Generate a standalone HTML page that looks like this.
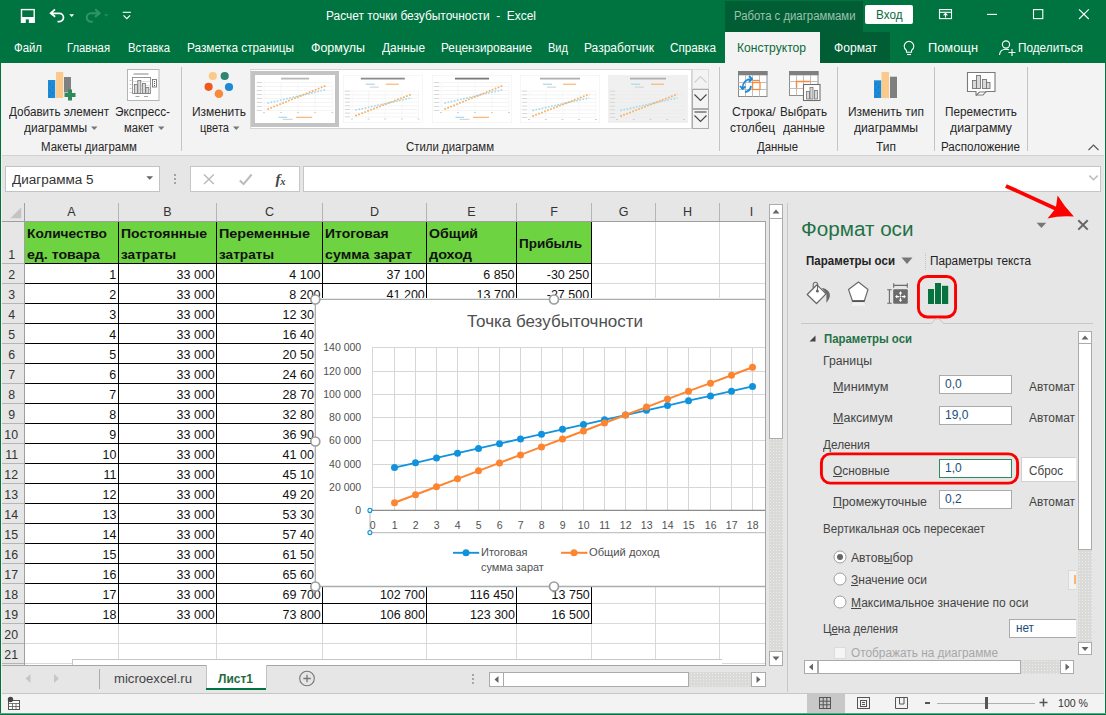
<!DOCTYPE html>
<html lang="ru"><head><meta charset="utf-8"><title>Excel</title><style>html,body{margin:0;padding:0;}body{width:1106px;height:715px;position:relative;overflow:hidden;background:#e6e6e6;font-family:"Liberation Sans",sans-serif;}.b{position:absolute;display:block;}.t{position:absolute;white-space:pre;display:block;}</style></head><body>
<div class="b" style="left:0px;top:0px;width:1106px;height:63px;background:#007440;"></div>
<div class="b" style="left:725px;top:1px;width:138px;height:31px;background:#005d34;"></div>
<span class="t" style="left:734.30px;top:8px;font-size:12px;line-height:16px;color:#9cc3af;transform:scaleX(0.9454);transform-origin:0 50%;">Работа с диаграммами</span>
<span class="t" style="left:326.00px;top:8px;font-size:12.5px;line-height:17px;color:#ffffff;transform:scaleX(0.9546);transform-origin:0 50%;">Расчет точки безубыточности  -  Excel</span>
<div class="b" style="left:865px;top:5px;width:48px;height:19px;background:#ffffff;border-radius:2px;"></div>
<span class="t" style="left:876.00px;top:7px;font-size:12.5px;line-height:17px;color:#0b6a3c;transform:scaleX(0.9371);transform-origin:0 50%;">Вход</span>
<svg class="b" style="left:18px;top:7px;" width="120" height="18" viewBox="0 0 120 18">
<rect x="3.500" y="2.600" width="12.700" height="12.700" fill="none" stroke="#fff" stroke-width="1.400"/>
<rect x="3.500" y="10" width="12.700" height="5.300" fill="#fff"/>
<rect x="7.800" y="12.400" width="3" height="3.600" fill="#007440"/>
<path d="M37 2.400L32.600 6.300L37.200 9.800M33 6.300H41.300a4.200 4.200 0 0 1 0 8.400h-1.800" fill="none" stroke="#fff" stroke-width="1.700"/>
<path d="M51.200 7.200h5l-2.500 2.800z" fill="#fff"/>
<path d="M77.200 2.400L81.600 6.300L77 9.800M81.200 6.300H73a4.200 4.200 0 0 0 0 8.400h1.800" fill="none" stroke="#2f9468" stroke-width="2.100"/>
<path d="M86 7.200h4.600l-2.300 2.600z" fill="#25895e"/>
<path d="M104.700 5.300h8.200" stroke="#fff" stroke-width="1.100"/><path d="M105.500 8.300l3.300 3.300 3.300-3.300" fill="none" stroke="#fff" stroke-width="1.200"/>
</svg>
<svg class="b" style="left:930px;top:4px;" width="176" height="24" viewBox="0 0 176 24">
<g fill="none" stroke="#fff" stroke-width="1.100">
<rect x="9.500" y="5.600" width="12" height="9"/><path d="M9.500 8.300h12"/><path d="M15.500 13.500v-3.800M13.600 11.300l1.900-1.900 1.900 1.900"/>
<path d="M57 10.400h10"/>
<rect x="103.500" y="5.600" width="9.300" height="9"/>
<path d="M149 5.400l9.800 9.600M158.800 5.400l-9.800 9.600"/>
</g></svg>
<span class="t" style="left:14.00px;top:40px;font-size:12.5px;line-height:17px;color:#ffffff;transform:scaleX(0.9110);transform-origin:0 50%;">Файл</span>
<span class="t" style="left:67.00px;top:40px;font-size:12.5px;line-height:17px;color:#ffffff;transform:scaleX(0.9038);transform-origin:0 50%;">Главная</span>
<span class="t" style="left:128.00px;top:40px;font-size:12.5px;line-height:17px;color:#ffffff;transform:scaleX(0.9040);transform-origin:0 50%;">Вставка</span>
<span class="t" style="left:187.00px;top:40px;font-size:12.5px;line-height:17px;color:#ffffff;transform:scaleX(0.9435);transform-origin:0 50%;">Разметка страницы</span>
<span class="t" style="left:311.00px;top:40px;font-size:12.5px;line-height:17px;color:#ffffff;transform:scaleX(0.9927);transform-origin:0 50%;">Формулы</span>
<span class="t" style="left:382.00px;top:40px;font-size:12.5px;line-height:17px;color:#ffffff;transform:scaleX(0.9522);transform-origin:0 50%;">Данные</span>
<span class="t" style="left:441.00px;top:40px;font-size:12.5px;line-height:17px;color:#ffffff;transform:scaleX(0.9427);transform-origin:0 50%;">Рецензирование</span>
<span class="t" style="left:548.00px;top:40px;font-size:12.5px;line-height:17px;color:#ffffff;transform:scaleX(0.8844);transform-origin:0 50%;">Вид</span>
<span class="t" style="left:584.00px;top:40px;font-size:12.5px;line-height:17px;color:#ffffff;transform:scaleX(0.9602);transform-origin:0 50%;">Разработчик</span>
<span class="t" style="left:670.00px;top:40px;font-size:12.5px;line-height:17px;color:#ffffff;transform:scaleX(0.9380);transform-origin:0 50%;">Справка</span>
<div class="b" style="left:725px;top:32px;width:95px;height:31px;background:#f3f3f3;"></div>
<span class="t" style="left:737.00px;top:40px;font-size:12.5px;line-height:17px;color:#0b6a3c;transform:scaleX(0.9680);transform-origin:0 50%;">Конструктор</span>
<div class="b" style="left:820px;top:32px;width:70px;height:31px;background:#005d34;"></div>
<span class="t" style="left:834.00px;top:40px;font-size:12.5px;line-height:17px;color:#ffffff;transform:scaleX(0.9682);transform-origin:0 50%;">Формат</span>
<span class="t" style="left:928.00px;top:40px;font-size:12.5px;line-height:17px;color:#ffffff;transform:scaleX(1.0273);transform-origin:0 50%;">Помощн</span>
<span class="t" style="left:1018.00px;top:40px;font-size:12.5px;line-height:17px;color:#ffffff;transform:scaleX(0.9416);transform-origin:0 50%;">Поделиться</span>
<svg class="b" style="left:900px;top:38px;" width="20" height="20" viewBox="0 0 20 20"><g fill="none" stroke="#fff" stroke-width="1.1"><path d="M6.5 12.5c-1.6-1.2-2.3-2.6-2.3-4.3a4.8 4.8 0 0 1 9.6 0c0 1.700-.7 3.100-2.300 4.300v1.800h-5z"/><path d="M7 16.500h4"/></g></svg>
<svg class="b" style="left:997px;top:38px;" width="20" height="20" viewBox="0 0 20 20"><g fill="none" stroke="#fff" stroke-width="1.1"><circle cx="9" cy="6.5" r="3.6"/><path d="M2.500 17c.3-3.600 2.800-5.800 6.500-5.800 1.200 0 2.200.2 3 .6"/><path d="M15 11v7M11.500 14.500h7"/></g></svg>
<div class="b" style="left:0px;top:63px;width:1106px;height:92px;background:#f3f3f3;"></div>
<div class="b" style="left:0px;top:155px;width:1106px;height:1px;background:#d2d2d2;"></div>
<span class="t" style="left:9.00px;top:104px;font-size:12.5px;line-height:17px;color:#262626;transform:scaleX(0.9324);transform-origin:0 50%;">Добавить элемент</span>
<span class="t" style="left:24.00px;top:120px;font-size:12.5px;line-height:17px;color:#262626;transform:scaleX(0.9565);transform-origin:0 50%;">диаграммы</span>
<span class="t" style="left:115.00px;top:104px;font-size:12.5px;line-height:17px;color:#262626;transform:scaleX(0.9453);transform-origin:0 50%;">Экспресс-</span>
<span class="t" style="left:124.00px;top:120px;font-size:12.5px;line-height:17px;color:#262626;transform:scaleX(0.8976);transform-origin:0 50%;">макет</span>
<span class="t" style="left:192.00px;top:104px;font-size:12.5px;line-height:17px;color:#262626;transform:scaleX(0.9577);transform-origin:0 50%;">Изменить</span>
<span class="t" style="left:200.00px;top:120px;font-size:12.5px;line-height:17px;color:#262626;transform:scaleX(0.8858);transform-origin:0 50%;">цвета</span>
<span class="t" style="left:41.00px;top:139px;font-size:12.5px;line-height:17px;color:#262626;transform:scaleX(0.9167);transform-origin:0 50%;">Макеты диаграмм</span>
<span class="t" style="left:406.00px;top:139px;font-size:12.5px;line-height:17px;color:#262626;transform:scaleX(0.9131);transform-origin:0 50%;">Стили диаграмм</span>
<span class="t" style="left:731.50px;top:104px;font-size:12.5px;line-height:17px;color:#262626;transform:scaleX(0.9704);transform-origin:0 50%;">Строка/</span>
<span class="t" style="left:730.00px;top:120px;font-size:12.5px;line-height:17px;color:#262626;transform:scaleX(0.9586);transform-origin:0 50%;">столбец</span>
<span class="t" style="left:780.00px;top:104px;font-size:12.5px;line-height:17px;color:#262626;transform:scaleX(0.9334);transform-origin:0 50%;">Выбрать</span>
<span class="t" style="left:783.00px;top:120px;font-size:12.5px;line-height:17px;color:#262626;transform:scaleX(0.9548);transform-origin:0 50%;">данные</span>
<span class="t" style="left:757.00px;top:139px;font-size:12.5px;line-height:17px;color:#262626;transform:scaleX(0.9079);transform-origin:0 50%;">Данные</span>
<span class="t" style="left:848.00px;top:104px;font-size:12.5px;line-height:17px;color:#262626;transform:scaleX(0.9579);transform-origin:0 50%;">Изменить тип</span>
<span class="t" style="left:854.00px;top:120px;font-size:12.5px;line-height:17px;color:#262626;transform:scaleX(0.9717);transform-origin:0 50%;">диаграммы</span>
<span class="t" style="left:876.00px;top:139px;font-size:12.5px;line-height:17px;color:#262626;transform:scaleX(0.9597);transform-origin:0 50%;">Тип</span>
<span class="t" style="left:945.00px;top:104px;font-size:12.5px;line-height:17px;color:#262626;transform:scaleX(0.9401);transform-origin:0 50%;">Переместить</span>
<span class="t" style="left:950.00px;top:120px;font-size:12.5px;line-height:17px;color:#262626;transform:scaleX(0.9799);transform-origin:0 50%;">диаграмму</span>
<span class="t" style="left:941.00px;top:139px;font-size:12.5px;line-height:17px;color:#262626;transform:scaleX(0.9297);transform-origin:0 50%;">Расположение</span>
<svg class="b" style="left:90.5px;top:126px;" width="7" height="5" viewBox="0 0 7 5"><path d="M0 .5h6.500L3.250 4z" fill="#777"/></svg>
<svg class="b" style="left:157.5px;top:126px;" width="7" height="5" viewBox="0 0 7 5"><path d="M0 .5h6.500L3.250 4z" fill="#777"/></svg>
<svg class="b" style="left:232.5px;top:126px;" width="7" height="5" viewBox="0 0 7 5"><path d="M0 .5h6.500L3.250 4z" fill="#777"/></svg>
<div class="b" style="left:181px;top:67px;width:1px;height:84px;background:#c4c4c4;"></div>
<div class="b" style="left:719px;top:67px;width:1px;height:84px;background:#c4c4c4;"></div>
<div class="b" style="left:837px;top:67px;width:1px;height:84px;background:#c4c4c4;"></div>
<div class="b" style="left:934px;top:67px;width:1px;height:84px;background:#c4c4c4;"></div>
<div class="b" style="left:1027px;top:67px;width:1px;height:84px;background:#c4c4c4;"></div>
<svg class="b" style="left:1087px;top:143px;" width="13" height="9" viewBox="0 0 13 9"><path d="M1.500 7l5-5 5 5" fill="none" stroke="#555" stroke-width="1.1"/></svg>
<svg class="b" style="left:46px;top:70px;" width="32" height="32" viewBox="0 0 32 32">
<rect x="2" y="10" width="7.200" height="18" fill="#1e8ad6"/>
<rect x="10" y="2" width="7.200" height="26" fill="#fbc98a"/>
<rect x="18" y="7" width="7" height="15.500" fill="#808080"/>
<path d="M22 19.500h4v3.500h3.500v4H26v3.500h-4V27h-3.500v-4H22z" fill="#2e8b5a"/>
<g fill="#0c5fa8"><circle cx="4" cy="14" r=".5"/><circle cx="6.500" cy="17" r=".5"/><circle cx="4" cy="20" r=".5"/><circle cx="6.500" cy="23" r=".5"/><circle cx="4" cy="26" r=".5"/></g>
</svg>
<svg class="b" style="left:127px;top:69px;" width="33" height="33" viewBox="0 0 33 33">
<rect x=".5" y=".5" width="31.500" height="31" fill="#fff" stroke="#b5b5b5"/>
<path d="M6.500 5h15" stroke="#b5b5b5" stroke-width="1.6"/>
<rect x="5.500" y="8.500" width="18" height="16" fill="#fff" stroke="#8a8a8a" stroke-width=".9"/>
<path d="M5.500 12.500h18M5.500 16.500h18M5.500 20.500h18" stroke="#cfcfcf" stroke-width=".7"/>
<g fill="#d9d9d9" stroke="#767676" stroke-width=".8"><rect x="7.500" y="15.500" width="3" height="9"/><rect x="10.800" y="11.500" width="3" height="13"/><rect x="15.500" y="14.500" width="3" height="10"/><rect x="18.800" y="18.500" width="3" height="6"/></g>
<rect x="25.500" y="10.500" width="4" height="7.500" fill="#fff" stroke="#767676" stroke-width=".9"/>
<g fill="#555"><rect x="27" y="12" width="1" height="1"/><rect x="27" y="14" width="1" height="1"/><rect x="27" y="16" width="1" height="1"/></g>
<path d="M8.500 27.500h4M17 27.500h4" stroke="#9a9a9a" stroke-width=".9"/>
<path d="M2.500 11.500h2M2.500 15.500h2M2.500 19.500h2M2.500 23.500h2" stroke="#b0b0b0" stroke-width=".7"/>
</svg>
<svg class="b" style="left:203px;top:70px;" width="32" height="30" viewBox="0 0 32 30">
<circle cx="9.800" cy="6" r="4.100" fill="#fbc98a"/>
<circle cx="21.700" cy="6" r="4.100" fill="#2f8670"/>
<circle cx="5.600" cy="16.800" r="4.100" fill="#f0581e"/>
<circle cx="26" cy="17" r="4.100" fill="#1e8ad6"/>
<circle cx="15.900" cy="23.800" r="4.300" fill="#f98a3a"/>
</svg>
<svg class="b" style="left:737px;top:70px;" width="32" height="28" viewBox="0 0 32 28">
<rect x="1.500" y="1.500" width="28.500" height="25" fill="#fff" stroke="#8d8d8d"/>
<rect x="1" y="1" width="29.500" height="4.300" fill="#7f7f7f"/>
<path d="M1.500 12.500h28.500M1.500 19.500h28.500M8.500 5v21.500M15.500 5v21.500M22.500 5v21.500" stroke="#b9b9b9" stroke-width=".9"/>
<rect x="15.500" y="12.500" width="7.500" height="7" fill="#fff" stroke="#f58a3c" stroke-width="1.300"/>
<path d="M15.500 10.500h7.500" stroke="#f58a3c" stroke-width="1.300"/>
<path d="M5.500 18.500c0-6 3.500-9.500 9-9.500M12 6l3 3-3 3M3 16l2.500 3 3-2.500" fill="none" stroke="#1e8ad6" stroke-width="1.800"/>
<path d="M8 22c3.500-.5 5.500-2.500 6-6" fill="none" stroke="#1e8ad6" stroke-width="1.800"/>
</svg>
<svg class="b" style="left:788px;top:70px;" width="34" height="32" viewBox="0 0 34 32">
<rect x="1.500" y="1.500" width="28.500" height="24" fill="#fff" stroke="#8d8d8d"/>
<rect x="1" y="1" width="29.500" height="4.300" fill="#7f7f7f"/>
<path d="M1.500 11.500h28.500M1.500 18.500h28.500M8.500 5v20.500M15.500 5v20.500M22.500 5v20.500" stroke="#b9b9b9" stroke-width=".9"/>
<path d="M8.500 18.500v-7h14" fill="none" stroke="#f58a3c" stroke-width="1.400"/>
<rect x="15.500" y="14.500" width="16.500" height="16" fill="#fff" stroke="#6f6f6f" stroke-width="1.100"/>
<g fill="#d9d9d9" stroke="#767676" stroke-width=".8"><rect x="18.500" y="21.500" width="3" height="7.500"/><rect x="22" y="17.500" width="3" height="11.500"/><rect x="26.500" y="20.500" width="3" height="8.500"/></g>
</svg>
<svg class="b" style="left:872px;top:70px;" width="28" height="30" viewBox="0 0 28 30">
<rect x="2" y="10.300" width="7.300" height="17.700" fill="#1e8ad6"/>
<rect x="9.500" y="2" width="7.500" height="26" fill="#fbc98a"/>
<rect x="18" y="6.700" width="7" height="21.300" fill="#7f7f7f"/>
<g fill="#0c5fa8"><circle cx="4" cy="14" r=".5"/><circle cx="6.500" cy="17" r=".5"/><circle cx="4" cy="20" r=".5"/><circle cx="6.500" cy="23" r=".5"/><circle cx="4" cy="26" r=".5"/></g>
</svg>
<svg class="b" style="left:966px;top:71px;" width="31" height="27" viewBox="0 0 31 27">
<path d="M1.500 1.500h27.500v19h-9l-3 3.500h-7v-3.500h-8.500z" fill="#fff" stroke="#7a7a7a" stroke-width="1.100"/>
<path d="M10 24.500l3.500-3.500h7" fill="none" stroke="#7a7a7a" stroke-width="1.100"/>
<g fill="#d9d9d9" stroke="#767676" stroke-width=".9"><rect x="6.500" y="9.500" width="4" height="8"/><rect x="10.500" y="4.500" width="4" height="13"/><rect x="16.500" y="8.500" width="4" height="9"/><rect x="20.500" y="11.500" width="3.500" height="6"/></g>
</svg>
<div class="b" style="left:250px;top:69px;width:442px;height:60px;background:#ffffff;border:1px solid #d4d4d4;box-sizing:border-box;"></div>
<div class="b" style="left:251px;top:71px;width:88px;height:56px;background:#c1c4c2;"></div>
<svg class="b" style="left:255px;top:75px;" width="80.3" height="48" viewBox="0 0 80.3 48"><rect x="0" y="0" width="80.3" height="48" fill="#fff"/><rect x="26.1" y="2.700" width="28" height="1.800" fill="#b9b9b9"/><rect x="23.65" y="41.7" width="8.500" height="1.300" fill="#a9dcf2"/><rect x="41.15" y="41.7" width="16" height="1.300" fill="#f9bb7c"/><rect x="27.65" y="43.8" width="10" height="1.100" fill="#d3d3d3"/><path d="M9 7.5H77.3" stroke="#e9e9e9" stroke-width=".5"/><rect x="1.800" y="7.0" width="5.500" height="1" fill="#d6d6d6"/><path d="M9 11.5H77.3" stroke="#e9e9e9" stroke-width=".5"/><rect x="1.800" y="11.0" width="5.500" height="1" fill="#d6d6d6"/><path d="M9 15.5H77.3" stroke="#e9e9e9" stroke-width=".5"/><rect x="1.800" y="15.0" width="5.500" height="1" fill="#d6d6d6"/><path d="M9 19.5H77.3" stroke="#e9e9e9" stroke-width=".5"/><rect x="1.800" y="19.0" width="5.500" height="1" fill="#d6d6d6"/><path d="M9 23.4H77.3" stroke="#e9e9e9" stroke-width=".5"/><rect x="1.800" y="22.9" width="5.500" height="1" fill="#d6d6d6"/><path d="M9 27.4H77.3" stroke="#e9e9e9" stroke-width=".5"/><rect x="1.800" y="26.9" width="5.500" height="1" fill="#d6d6d6"/><path d="M9 31.4H77.3" stroke="#e9e9e9" stroke-width=".5"/><rect x="1.800" y="30.9" width="5.500" height="1" fill="#d6d6d6"/><path d="M9 35.4H77.3" stroke="#e9e9e9" stroke-width=".5"/><rect x="1.800" y="34.9" width="5.500" height="1" fill="#d6d6d6"/><path d="M9.0 7.5V35.4" stroke="#efefef" stroke-width=".5"/><rect x="8.0" y="37.1" width="2" height="1" fill="#d0d0d0"/><path d="M26.1 7.5V35.4" stroke="#efefef" stroke-width=".5"/><rect x="25.1" y="37.1" width="2" height="1" fill="#d0d0d0"/><path d="M43.1 7.5V35.4" stroke="#efefef" stroke-width=".5"/><rect x="42.1" y="37.1" width="2" height="1" fill="#d0d0d0"/><path d="M60.2 7.5V35.4" stroke="#efefef" stroke-width=".5"/><rect x="59.2" y="37.1" width="2" height="1" fill="#d0d0d0"/><path d="M77.3 7.5V35.4" stroke="#efefef" stroke-width=".5"/><rect x="76.3" y="37.1" width="2" height="1" fill="#d0d0d0"/><path d="M12.4 28.2L70.5 14.8" stroke="#9fdaf2" stroke-width="1.600" stroke-dasharray="1.700 1.500"/><path d="M12.4 34.3L70.5 10.8" stroke="#f9b060" stroke-width="1.800" stroke-dasharray="1.700 1.500"/></svg>
<svg class="b" style="left:343.4px;top:75px;" width="79.5" height="47.5" viewBox="0 0 79.5 47.5"><rect x="0" y="0" width="79.5" height="47.5" fill="#fff"/><rect x=".25" y=".25" width="79.0" height="47.0" fill="none" stroke="#ededed" stroke-width=".5"/><rect x="17.8" y="2.700" width="44" height="1.800" fill="#8c8c8c"/><rect x="22.75" y="8.600" width="9" height="1.300" fill="#a9dcf2"/><rect x="42.75" y="8.600" width="13" height="1.300" fill="#f9bb7c"/><rect x="26.75" y="11.600" width="9" height="1.100" fill="#d3d3d3"/><path d="M9 16.1H75.5" stroke="#e9e9e9" stroke-width=".5"/><rect x="1.800" y="15.6" width="5.500" height="1" fill="#d6d6d6"/><path d="M9 19.8H75.5" stroke="#e9e9e9" stroke-width=".5"/><rect x="1.800" y="19.3" width="5.500" height="1" fill="#d6d6d6"/><path d="M9 23.4H75.5" stroke="#e9e9e9" stroke-width=".5"/><rect x="1.800" y="22.9" width="5.500" height="1" fill="#d6d6d6"/><path d="M9 27.1H75.5" stroke="#e9e9e9" stroke-width=".5"/><rect x="1.800" y="26.6" width="5.500" height="1" fill="#d6d6d6"/><path d="M9 30.8H75.5" stroke="#e9e9e9" stroke-width=".5"/><rect x="1.800" y="30.3" width="5.500" height="1" fill="#d6d6d6"/><path d="M9 34.5H75.5" stroke="#e9e9e9" stroke-width=".5"/><rect x="1.800" y="34.0" width="5.500" height="1" fill="#d6d6d6"/><path d="M9 38.1H75.5" stroke="#e9e9e9" stroke-width=".5"/><rect x="1.800" y="37.6" width="5.500" height="1" fill="#d6d6d6"/><path d="M9 41.8H75.5" stroke="#e9e9e9" stroke-width=".5"/><rect x="1.800" y="41.3" width="5.500" height="1" fill="#d6d6d6"/><path d="M9.0 16.1V41.8" stroke="#efefef" stroke-width=".5"/><rect x="8.0" y="43.5" width="2" height="1" fill="#d0d0d0"/><path d="M25.6 16.1V41.8" stroke="#efefef" stroke-width=".5"/><rect x="24.6" y="43.5" width="2" height="1" fill="#d0d0d0"/><path d="M42.2 16.1V41.8" stroke="#efefef" stroke-width=".5"/><rect x="41.2" y="43.5" width="2" height="1" fill="#d0d0d0"/><path d="M58.9 16.1V41.8" stroke="#efefef" stroke-width=".5"/><rect x="57.9" y="43.5" width="2" height="1" fill="#d0d0d0"/><path d="M75.5 16.1V41.8" stroke="#efefef" stroke-width=".5"/><rect x="74.5" y="43.5" width="2" height="1" fill="#d0d0d0"/><path d="M12.3 35.2L68.8 22.8" stroke="#9fdaf2" stroke-width="1.600" stroke-dasharray="1.700 1.500"/><path d="M12.3 40.8L68.8 19.2" stroke="#f9b060" stroke-width="1.800" stroke-dasharray="1.700 1.500"/></svg>
<svg class="b" style="left:431.5px;top:75px;" width="80" height="48" viewBox="0 0 80 48"><rect x="0" y="0" width="80" height="48" fill="#fff"/><rect x=".25" y=".25" width="79.5" height="47.5" fill="none" stroke="#ededed" stroke-width=".5"/><rect x="23.0" y="2.700" width="34" height="1.800" fill="#7a7a7a"/><rect x="23.5" y="41.7" width="8.500" height="1.300" fill="#a9dcf2"/><rect x="41.0" y="41.7" width="16" height="1.300" fill="#f9bb7c"/><rect x="27.5" y="43.8" width="10" height="1.100" fill="#d3d3d3"/><path d="M9 7.5H77" stroke="#e9e9e9" stroke-width=".5"/><rect x="1.800" y="7.0" width="5.500" height="1" fill="#d6d6d6"/><path d="M9 11.5H77" stroke="#e9e9e9" stroke-width=".5"/><rect x="1.800" y="11.0" width="5.500" height="1" fill="#d6d6d6"/><path d="M9 15.5H77" stroke="#e9e9e9" stroke-width=".5"/><rect x="1.800" y="15.0" width="5.500" height="1" fill="#d6d6d6"/><path d="M9 19.5H77" stroke="#e9e9e9" stroke-width=".5"/><rect x="1.800" y="19.0" width="5.500" height="1" fill="#d6d6d6"/><path d="M9 23.4H77" stroke="#e9e9e9" stroke-width=".5"/><rect x="1.800" y="22.9" width="5.500" height="1" fill="#d6d6d6"/><path d="M9 27.4H77" stroke="#e9e9e9" stroke-width=".5"/><rect x="1.800" y="26.9" width="5.500" height="1" fill="#d6d6d6"/><path d="M9 31.4H77" stroke="#e9e9e9" stroke-width=".5"/><rect x="1.800" y="30.9" width="5.500" height="1" fill="#d6d6d6"/><path d="M9 35.4H77" stroke="#e9e9e9" stroke-width=".5"/><rect x="1.800" y="34.9" width="5.500" height="1" fill="#d6d6d6"/><path d="M9.0 7.5V35.4" stroke="#efefef" stroke-width=".5"/><rect x="8.0" y="37.1" width="2" height="1" fill="#d0d0d0"/><path d="M26.0 7.5V35.4" stroke="#efefef" stroke-width=".5"/><rect x="25.0" y="37.1" width="2" height="1" fill="#d0d0d0"/><path d="M43.0 7.5V35.4" stroke="#efefef" stroke-width=".5"/><rect x="42.0" y="37.1" width="2" height="1" fill="#d0d0d0"/><path d="M60.0 7.5V35.4" stroke="#efefef" stroke-width=".5"/><rect x="59.0" y="37.1" width="2" height="1" fill="#d0d0d0"/><path d="M77.0 7.5V35.4" stroke="#efefef" stroke-width=".5"/><rect x="76.0" y="37.1" width="2" height="1" fill="#d0d0d0"/><path d="M12.4 28.2L70.2 14.8" stroke="#9fdaf2" stroke-width="1.600" stroke-dasharray="1.700 1.500"/><path d="M12.4 34.3L70.2 10.8" stroke="#f9b060" stroke-width="1.800" stroke-dasharray="1.700 1.500"/></svg>
<svg class="b" style="left:519.5px;top:75px;" width="80" height="48" viewBox="0 0 80 48"><rect x="0" y="0" width="80" height="48" fill="#fff"/><rect x=".25" y=".25" width="79.5" height="47.5" fill="none" stroke="#ededed" stroke-width=".5"/><rect x="20.0" y="2.700" width="40" height="1.800" fill="#b0b0b0"/><rect x="23.0" y="8.600" width="9" height="1.300" fill="#a9dcf2"/><rect x="43.0" y="8.600" width="13" height="1.300" fill="#f9bb7c"/><rect x="27.0" y="11.600" width="9" height="1.100" fill="#d3d3d3"/><path d="M9 16.1H76" stroke="#e9e9e9" stroke-width=".5"/><rect x="1.800" y="15.6" width="5.500" height="1" fill="#d6d6d6"/><path d="M9 19.8H76" stroke="#e9e9e9" stroke-width=".5"/><rect x="1.800" y="19.3" width="5.500" height="1" fill="#d6d6d6"/><path d="M9 23.6H76" stroke="#e9e9e9" stroke-width=".5"/><rect x="1.800" y="23.1" width="5.500" height="1" fill="#d6d6d6"/><path d="M9 27.3H76" stroke="#e9e9e9" stroke-width=".5"/><rect x="1.800" y="26.8" width="5.500" height="1" fill="#d6d6d6"/><path d="M9 31.1H76" stroke="#e9e9e9" stroke-width=".5"/><rect x="1.800" y="30.6" width="5.500" height="1" fill="#d6d6d6"/><path d="M9 34.8H76" stroke="#e9e9e9" stroke-width=".5"/><rect x="1.800" y="34.3" width="5.500" height="1" fill="#d6d6d6"/><path d="M9 38.6H76" stroke="#e9e9e9" stroke-width=".5"/><rect x="1.800" y="38.1" width="5.500" height="1" fill="#d6d6d6"/><path d="M9 42.3H76" stroke="#e9e9e9" stroke-width=".5"/><rect x="1.800" y="41.8" width="5.500" height="1" fill="#d6d6d6"/><path d="M9.0 16.1V42.3" stroke="#efefef" stroke-width=".5"/><rect x="8.0" y="44.0" width="2" height="1" fill="#d0d0d0"/><path d="M25.8 16.1V42.3" stroke="#efefef" stroke-width=".5"/><rect x="24.8" y="44.0" width="2" height="1" fill="#d0d0d0"/><path d="M42.5 16.1V42.3" stroke="#efefef" stroke-width=".5"/><rect x="41.5" y="44.0" width="2" height="1" fill="#d0d0d0"/><path d="M59.2 16.1V42.3" stroke="#efefef" stroke-width=".5"/><rect x="58.2" y="44.0" width="2" height="1" fill="#d0d0d0"/><path d="M76.0 16.1V42.3" stroke="#efefef" stroke-width=".5"/><rect x="75.0" y="44.0" width="2" height="1" fill="#d0d0d0"/><path d="M12.3 35.5L69.3 22.9" stroke="#9fdaf2" stroke-width="1.600" stroke-dasharray="1.700 1.500"/><path d="M12.3 41.3L69.3 19.2" stroke="#f9b060" stroke-width="1.800" stroke-dasharray="1.700 1.500"/></svg>
<svg class="b" style="left:607.5px;top:75px;" width="80" height="48" viewBox="0 0 80 48"><rect x="0" y="0" width="80" height="48" fill="#f0f0f0"/><rect x="22.0" y="2.700" width="36" height="1.800" fill="#b0b0b0"/><rect x="23.0" y="8.600" width="9" height="1.300" fill="#a9dcf2"/><rect x="43.0" y="8.600" width="13" height="1.300" fill="#f9bb7c"/><rect x="27.0" y="11.600" width="9" height="1.100" fill="#d3d3d3"/><path d="M9 16.1H76" stroke="#e9e9e9" stroke-width=".5"/><rect x="1.800" y="15.6" width="5.500" height="1" fill="#d6d6d6"/><path d="M9 19.8H76" stroke="#e9e9e9" stroke-width=".5"/><rect x="1.800" y="19.3" width="5.500" height="1" fill="#d6d6d6"/><path d="M9 23.6H76" stroke="#e9e9e9" stroke-width=".5"/><rect x="1.800" y="23.1" width="5.500" height="1" fill="#d6d6d6"/><path d="M9 27.3H76" stroke="#e9e9e9" stroke-width=".5"/><rect x="1.800" y="26.8" width="5.500" height="1" fill="#d6d6d6"/><path d="M9 31.1H76" stroke="#e9e9e9" stroke-width=".5"/><rect x="1.800" y="30.6" width="5.500" height="1" fill="#d6d6d6"/><path d="M9 34.8H76" stroke="#e9e9e9" stroke-width=".5"/><rect x="1.800" y="34.3" width="5.500" height="1" fill="#d6d6d6"/><path d="M9 38.6H76" stroke="#e9e9e9" stroke-width=".5"/><rect x="1.800" y="38.1" width="5.500" height="1" fill="#d6d6d6"/><path d="M9 42.3H76" stroke="#e9e9e9" stroke-width=".5"/><rect x="1.800" y="41.8" width="5.500" height="1" fill="#d6d6d6"/><path d="M9.0 16.1V42.3" stroke="#efefef" stroke-width=".5"/><rect x="8.0" y="44.0" width="2" height="1" fill="#d0d0d0"/><path d="M25.8 16.1V42.3" stroke="#efefef" stroke-width=".5"/><rect x="24.8" y="44.0" width="2" height="1" fill="#d0d0d0"/><path d="M42.5 16.1V42.3" stroke="#efefef" stroke-width=".5"/><rect x="41.5" y="44.0" width="2" height="1" fill="#d0d0d0"/><path d="M59.2 16.1V42.3" stroke="#efefef" stroke-width=".5"/><rect x="58.2" y="44.0" width="2" height="1" fill="#d0d0d0"/><path d="M76.0 16.1V42.3" stroke="#efefef" stroke-width=".5"/><rect x="75.0" y="44.0" width="2" height="1" fill="#d0d0d0"/><path d="M12.3 35.5L69.3 22.9" stroke="#9fdaf2" stroke-width="1.600" stroke-dasharray="1.700 1.500"/><path d="M12.3 41.3L69.3 19.2" stroke="#f9b060" stroke-width="1.800" stroke-dasharray="1.700 1.500"/></svg>
<div class="b" style="left:692px;top:69px;width:17px;height:20px;background:#f3f3f3;border:1px solid #dcdcdc;box-sizing:border-box;"></div>
<div class="b" style="left:692px;top:89px;width:17px;height:20px;background:#f3f3f3;border:1px solid #ababab;box-sizing:border-box;"></div>
<div class="b" style="left:692px;top:109px;width:17px;height:20px;background:#f3f3f3;border:1px solid #ababab;box-sizing:border-box;"></div>
<svg class="b" style="left:692px;top:69px;" width="17" height="60" viewBox="0 0 17 60"><path d="M2.500 13.500l6-6 6 6" fill="none" stroke="#cfcfcf" stroke-width="1.100"/>
<path d="M2.500 25.500l6 6 6-6" fill="none" stroke="#444" stroke-width="1.100"/>
<path d="M2.500 43h12" stroke="#444" stroke-width="1.100"/><path d="M2.500 46.500l6 6 6-6" fill="none" stroke="#444" stroke-width="1.100"/></svg>
<div class="b" style="left:0px;top:156px;width:1106px;height:537px;background:#e6e6e6;"></div>
<div class="b" style="left:5px;top:166px;width:155px;height:26px;background:#ffffff;border:1px solid #c3c3c3;box-sizing:border-box;"></div>
<span class="t" style="left:11.50px;top:172px;font-size:12.5px;line-height:17px;color:#333;transform:scaleX(1.0804);transform-origin:0 50%;">Диаграмма 5</span>
<svg class="b" style="left:145px;top:175px;" width="10" height="6" viewBox="0 0 10 6"><path d="M1.300 1.200h6.800L4.700 4.800z" fill="#666"/></svg>
<div class="b" style="left:174px;top:174px;width:2px;height:2px;background:#a3a3a3;"></div>
<div class="b" style="left:174px;top:178.2px;width:2px;height:2px;background:#a3a3a3;"></div>
<div class="b" style="left:174px;top:182.4px;width:2px;height:2px;background:#a3a3a3;"></div>
<div class="b" style="left:190px;top:166px;width:110px;height:26px;background:#ffffff;border:1px solid #c6c6c6;box-sizing:border-box;"></div>
<svg class="b" style="left:200px;top:171px;" width="95" height="16" viewBox="0 0 95 16"><path d="M4 3.500l9.800 9.500M13.800 3.500l-9.800 9.500" stroke="#b9b9b9" stroke-width="1.400" fill="none"/>
<path d="M39.800 9.500l3.800 3.600 8-9.600" stroke="#bbbbbb" stroke-width="2" fill="none"/></svg>
<span class="t" style="left:275.50px;top:169px;font-size:15px;line-height:20px;color:#444;font-weight:bold;font-style:italic;font-family:'Liberation Serif',serif;">f</span>
<span class="t" style="left:280.30px;top:174px;font-size:10.5px;line-height:15px;color:#444;font-weight:bold;font-style:italic;font-family:'Liberation Serif',serif;">x</span>
<div class="b" style="left:303px;top:166px;width:798px;height:26px;background:#ffffff;border:1px solid #c6c6c6;box-sizing:border-box;"></div>
<svg class="b" style="left:1088px;top:174px;" width="11" height="8" viewBox="0 0 11 8"><path d="M1.300 1.600l4.200 4.200 4.200-4.200" fill="none" stroke="#bdbdbd" stroke-width="1.500"/></svg>
<div class="b" style="left:2px;top:203px;width:764px;height:462px;overflow:hidden;background:#fff;">
<div class="b" style="left:-2px;top:-203px;width:1106px;height:715px;">
<div class="b" style="left:2px;top:203px;width:764px;height:18px;background:#e6e6e6;"></div>
<div class="b" style="left:2px;top:203px;width:22px;height:462px;background:#e6e6e6;"></div>
<div class="b" style="left:2px;top:221px;width:764px;height:1px;background:#9f9f9f;"></div>
<div class="b" style="left:24px;top:203px;width:1px;height:462px;background:#9f9f9f;"></div>
<svg class="b" style="left:9px;top:206px;" width="14" height="14" viewBox="0 0 14 14"><path d="M12.300 1.300v11h-11z" fill="#c4c4c4"/></svg>
<span class="t" style="left:67.33px;top:204px;font-size:12.5px;line-height:17px;color:#333;">A</span>
<div class="b" style="left:118px;top:203px;width:1px;height:18px;background:#b5b5b5;"></div>
<span class="t" style="left:163.33px;top:204px;font-size:12.5px;line-height:17px;color:#333;">B</span>
<div class="b" style="left:216px;top:203px;width:1px;height:18px;background:#b5b5b5;"></div>
<span class="t" style="left:264.99px;top:204px;font-size:12.5px;line-height:17px;color:#333;">C</span>
<div class="b" style="left:322px;top:203px;width:1px;height:18px;background:#b5b5b5;"></div>
<span class="t" style="left:369.99px;top:204px;font-size:12.5px;line-height:17px;color:#333;">D</span>
<div class="b" style="left:426px;top:203px;width:1px;height:18px;background:#b5b5b5;"></div>
<span class="t" style="left:467.33px;top:204px;font-size:12.5px;line-height:17px;color:#333;">E</span>
<div class="b" style="left:516px;top:203px;width:1px;height:18px;background:#b5b5b5;"></div>
<span class="t" style="left:550.18px;top:204px;font-size:12.5px;line-height:17px;color:#333;">F</span>
<div class="b" style="left:591px;top:203px;width:1px;height:18px;background:#b5b5b5;"></div>
<span class="t" style="left:618.64px;top:204px;font-size:12.5px;line-height:17px;color:#333;">G</span>
<div class="b" style="left:655px;top:203px;width:1px;height:18px;background:#b5b5b5;"></div>
<span class="t" style="left:682.99px;top:204px;font-size:12.5px;line-height:17px;color:#333;">H</span>
<div class="b" style="left:719px;top:203px;width:1px;height:18px;background:#b5b5b5;"></div>
<span class="t" style="left:749.76px;top:204px;font-size:12.5px;line-height:17px;color:#333;">I</span>
<div class="b" style="left:783px;top:203px;width:1px;height:18px;background:#b5b5b5;"></div>
<div class="b" style="left:25px;top:263px;width:742px;height:1px;background:#d9d9d9;"></div>
<div class="b" style="left:25px;top:283px;width:742px;height:1px;background:#d9d9d9;"></div>
<div class="b" style="left:25px;top:303px;width:742px;height:1px;background:#d9d9d9;"></div>
<div class="b" style="left:25px;top:323px;width:742px;height:1px;background:#d9d9d9;"></div>
<div class="b" style="left:25px;top:343px;width:742px;height:1px;background:#d9d9d9;"></div>
<div class="b" style="left:25px;top:363px;width:742px;height:1px;background:#d9d9d9;"></div>
<div class="b" style="left:25px;top:383px;width:742px;height:1px;background:#d9d9d9;"></div>
<div class="b" style="left:25px;top:403px;width:742px;height:1px;background:#d9d9d9;"></div>
<div class="b" style="left:25px;top:423px;width:742px;height:1px;background:#d9d9d9;"></div>
<div class="b" style="left:25px;top:443px;width:742px;height:1px;background:#d9d9d9;"></div>
<div class="b" style="left:25px;top:463px;width:742px;height:1px;background:#d9d9d9;"></div>
<div class="b" style="left:25px;top:483px;width:742px;height:1px;background:#d9d9d9;"></div>
<div class="b" style="left:25px;top:503px;width:742px;height:1px;background:#d9d9d9;"></div>
<div class="b" style="left:25px;top:523px;width:742px;height:1px;background:#d9d9d9;"></div>
<div class="b" style="left:25px;top:543px;width:742px;height:1px;background:#d9d9d9;"></div>
<div class="b" style="left:25px;top:563px;width:742px;height:1px;background:#d9d9d9;"></div>
<div class="b" style="left:25px;top:583px;width:742px;height:1px;background:#d9d9d9;"></div>
<div class="b" style="left:25px;top:603px;width:742px;height:1px;background:#d9d9d9;"></div>
<div class="b" style="left:25px;top:623px;width:742px;height:1px;background:#d9d9d9;"></div>
<div class="b" style="left:25px;top:643px;width:742px;height:1px;background:#d9d9d9;"></div>
<div class="b" style="left:25px;top:663px;width:742px;height:1px;background:#d9d9d9;"></div>
<div class="b" style="left:25px;top:683px;width:742px;height:1px;background:#d9d9d9;"></div>
<div class="b" style="left:118px;top:222px;width:1px;height:444px;background:#d9d9d9;"></div>
<div class="b" style="left:216px;top:222px;width:1px;height:444px;background:#d9d9d9;"></div>
<div class="b" style="left:322px;top:222px;width:1px;height:444px;background:#d9d9d9;"></div>
<div class="b" style="left:426px;top:222px;width:1px;height:444px;background:#d9d9d9;"></div>
<div class="b" style="left:516px;top:222px;width:1px;height:444px;background:#d9d9d9;"></div>
<div class="b" style="left:591px;top:222px;width:1px;height:444px;background:#d9d9d9;"></div>
<div class="b" style="left:655px;top:222px;width:1px;height:444px;background:#d9d9d9;"></div>
<div class="b" style="left:719px;top:222px;width:1px;height:444px;background:#d9d9d9;"></div>
<div class="b" style="left:783px;top:222px;width:1px;height:444px;background:#d9d9d9;"></div>
<span class="t" style="left:7.98px;top:246px;font-size:13px;line-height:18px;color:#333;transform:scaleX(0.9500);transform-origin:50% 50%;">1</span>
<div class="b" style="left:2px;top:263px;width:22px;height:1px;background:#b5b5b5;"></div>
<span class="t" style="left:7.98px;top:266px;font-size:13px;line-height:18px;color:#333;transform:scaleX(0.9500);transform-origin:50% 50%;">2</span>
<div class="b" style="left:2px;top:283px;width:22px;height:1px;background:#b5b5b5;"></div>
<span class="t" style="left:7.98px;top:286px;font-size:13px;line-height:18px;color:#333;transform:scaleX(0.9500);transform-origin:50% 50%;">3</span>
<div class="b" style="left:2px;top:303px;width:22px;height:1px;background:#b5b5b5;"></div>
<span class="t" style="left:7.98px;top:306px;font-size:13px;line-height:18px;color:#333;transform:scaleX(0.9500);transform-origin:50% 50%;">4</span>
<div class="b" style="left:2px;top:323px;width:22px;height:1px;background:#b5b5b5;"></div>
<span class="t" style="left:7.98px;top:326px;font-size:13px;line-height:18px;color:#333;transform:scaleX(0.9500);transform-origin:50% 50%;">5</span>
<div class="b" style="left:2px;top:343px;width:22px;height:1px;background:#b5b5b5;"></div>
<span class="t" style="left:7.98px;top:346px;font-size:13px;line-height:18px;color:#333;transform:scaleX(0.9500);transform-origin:50% 50%;">6</span>
<div class="b" style="left:2px;top:363px;width:22px;height:1px;background:#b5b5b5;"></div>
<span class="t" style="left:7.98px;top:366px;font-size:13px;line-height:18px;color:#333;transform:scaleX(0.9500);transform-origin:50% 50%;">7</span>
<div class="b" style="left:2px;top:383px;width:22px;height:1px;background:#b5b5b5;"></div>
<span class="t" style="left:7.98px;top:386px;font-size:13px;line-height:18px;color:#333;transform:scaleX(0.9500);transform-origin:50% 50%;">8</span>
<div class="b" style="left:2px;top:403px;width:22px;height:1px;background:#b5b5b5;"></div>
<span class="t" style="left:7.98px;top:406px;font-size:13px;line-height:18px;color:#333;transform:scaleX(0.9500);transform-origin:50% 50%;">9</span>
<div class="b" style="left:2px;top:423px;width:22px;height:1px;background:#b5b5b5;"></div>
<span class="t" style="left:4.37px;top:426px;font-size:13px;line-height:18px;color:#333;transform:scaleX(0.9500);transform-origin:50% 50%;">10</span>
<div class="b" style="left:2px;top:443px;width:22px;height:1px;background:#b5b5b5;"></div>
<span class="t" style="left:4.85px;top:446px;font-size:13px;line-height:18px;color:#333;transform:scaleX(0.9500);transform-origin:50% 50%;">11</span>
<div class="b" style="left:2px;top:463px;width:22px;height:1px;background:#b5b5b5;"></div>
<span class="t" style="left:4.37px;top:466px;font-size:13px;line-height:18px;color:#333;transform:scaleX(0.9500);transform-origin:50% 50%;">12</span>
<div class="b" style="left:2px;top:483px;width:22px;height:1px;background:#b5b5b5;"></div>
<span class="t" style="left:4.37px;top:486px;font-size:13px;line-height:18px;color:#333;transform:scaleX(0.9500);transform-origin:50% 50%;">13</span>
<div class="b" style="left:2px;top:503px;width:22px;height:1px;background:#b5b5b5;"></div>
<span class="t" style="left:4.37px;top:506px;font-size:13px;line-height:18px;color:#333;transform:scaleX(0.9500);transform-origin:50% 50%;">14</span>
<div class="b" style="left:2px;top:523px;width:22px;height:1px;background:#b5b5b5;"></div>
<span class="t" style="left:4.37px;top:526px;font-size:13px;line-height:18px;color:#333;transform:scaleX(0.9500);transform-origin:50% 50%;">15</span>
<div class="b" style="left:2px;top:543px;width:22px;height:1px;background:#b5b5b5;"></div>
<span class="t" style="left:4.37px;top:546px;font-size:13px;line-height:18px;color:#333;transform:scaleX(0.9500);transform-origin:50% 50%;">16</span>
<div class="b" style="left:2px;top:563px;width:22px;height:1px;background:#b5b5b5;"></div>
<span class="t" style="left:4.37px;top:566px;font-size:13px;line-height:18px;color:#333;transform:scaleX(0.9500);transform-origin:50% 50%;">17</span>
<div class="b" style="left:2px;top:583px;width:22px;height:1px;background:#b5b5b5;"></div>
<span class="t" style="left:4.37px;top:586px;font-size:13px;line-height:18px;color:#333;transform:scaleX(0.9500);transform-origin:50% 50%;">18</span>
<div class="b" style="left:2px;top:603px;width:22px;height:1px;background:#b5b5b5;"></div>
<span class="t" style="left:4.37px;top:606px;font-size:13px;line-height:18px;color:#333;transform:scaleX(0.9500);transform-origin:50% 50%;">19</span>
<div class="b" style="left:2px;top:623px;width:22px;height:1px;background:#b5b5b5;"></div>
<span class="t" style="left:4.37px;top:626px;font-size:13px;line-height:18px;color:#333;transform:scaleX(0.9500);transform-origin:50% 50%;">20</span>
<div class="b" style="left:2px;top:643px;width:22px;height:1px;background:#b5b5b5;"></div>
<span class="t" style="left:4.37px;top:646px;font-size:13px;line-height:18px;color:#333;transform:scaleX(0.9500);transform-origin:50% 50%;">21</span>
<div class="b" style="left:2px;top:663px;width:22px;height:1px;background:#b5b5b5;"></div>
<div class="b" style="left:25px;top:222px;width:567px;height:42px;background:#6dd340;"></div>
<span class="t" style="left:26.70px;top:225px;font-size:13px;line-height:18px;color:#111;font-weight:bold;transform:scaleX(1.0559);transform-origin:0 50%;">Количество</span>
<span class="t" style="left:26.70px;top:246px;font-size:13px;line-height:18px;color:#111;font-weight:bold;transform:scaleX(1.0884);transform-origin:0 50%;">ед. товара</span>
<span class="t" style="left:120.70px;top:225px;font-size:13px;line-height:18px;color:#111;font-weight:bold;transform:scaleX(1.0759);transform-origin:0 50%;">Постоянные</span>
<span class="t" style="left:120.70px;top:246px;font-size:13px;line-height:18px;color:#111;font-weight:bold;transform:scaleX(1.0471);transform-origin:0 50%;">затраты</span>
<span class="t" style="left:218.70px;top:225px;font-size:13px;line-height:18px;color:#111;font-weight:bold;transform:scaleX(1.1036);transform-origin:0 50%;">Переменные</span>
<span class="t" style="left:218.70px;top:246px;font-size:13px;line-height:18px;color:#111;font-weight:bold;transform:scaleX(1.0471);transform-origin:0 50%;">затраты</span>
<span class="t" style="left:324.70px;top:225px;font-size:13px;line-height:18px;color:#111;font-weight:bold;transform:scaleX(1.0708);transform-origin:0 50%;">Итоговая</span>
<span class="t" style="left:324.70px;top:246px;font-size:13px;line-height:18px;color:#111;font-weight:bold;transform:scaleX(1.0977);transform-origin:0 50%;">сумма зарат</span>
<span class="t" style="left:428.70px;top:225px;font-size:13px;line-height:18px;color:#111;font-weight:bold;transform:scaleX(1.0865);transform-origin:0 50%;">Общий</span>
<span class="t" style="left:428.70px;top:246px;font-size:13px;line-height:18px;color:#111;font-weight:bold;transform:scaleX(1.1082);transform-origin:0 50%;">доход</span>
<span class="t" style="left:518.70px;top:235px;font-size:13px;line-height:18px;color:#111;font-weight:bold;transform:scaleX(1.0386);transform-origin:0 50%;">Прибыль</span>
<span class="t" style="left:109.27px;top:266px;font-size:13px;line-height:18px;color:#111;transform:scaleX(0.9600);transform-origin:100% 50%;">1</span>
<span class="t" style="left:174.73px;top:266px;font-size:13px;line-height:18px;color:#111;transform:scaleX(0.9600);transform-origin:100% 50%;">33 000</span>
<span class="t" style="left:287.96px;top:266px;font-size:13px;line-height:18px;color:#111;transform:scaleX(0.9600);transform-origin:100% 50%;">4 100</span>
<span class="t" style="left:384.73px;top:266px;font-size:13px;line-height:18px;color:#111;transform:scaleX(0.9600);transform-origin:100% 50%;">37 100</span>
<span class="t" style="left:481.96px;top:266px;font-size:13px;line-height:18px;color:#111;transform:scaleX(0.9600);transform-origin:100% 50%;">6 850</span>
<span class="t" style="left:545.41px;top:266px;font-size:13px;line-height:18px;color:#111;transform:scaleX(0.9600);transform-origin:100% 50%;">-30 250</span>
<span class="t" style="left:109.27px;top:286px;font-size:13px;line-height:18px;color:#111;transform:scaleX(0.9600);transform-origin:100% 50%;">2</span>
<span class="t" style="left:174.73px;top:286px;font-size:13px;line-height:18px;color:#111;transform:scaleX(0.9600);transform-origin:100% 50%;">33 000</span>
<span class="t" style="left:287.96px;top:286px;font-size:13px;line-height:18px;color:#111;transform:scaleX(0.9600);transform-origin:100% 50%;">8 200</span>
<span class="t" style="left:384.73px;top:286px;font-size:13px;line-height:18px;color:#111;transform:scaleX(0.9600);transform-origin:100% 50%;">41 200</span>
<span class="t" style="left:474.73px;top:286px;font-size:13px;line-height:18px;color:#111;transform:scaleX(0.9600);transform-origin:100% 50%;">13 700</span>
<span class="t" style="left:545.41px;top:286px;font-size:13px;line-height:18px;color:#111;transform:scaleX(0.9600);transform-origin:100% 50%;">-27 500</span>
<span class="t" style="left:109.27px;top:306px;font-size:13px;line-height:18px;color:#111;transform:scaleX(0.9600);transform-origin:100% 50%;">3</span>
<span class="t" style="left:174.73px;top:306px;font-size:13px;line-height:18px;color:#111;transform:scaleX(0.9600);transform-origin:100% 50%;">33 000</span>
<span class="t" style="left:280.73px;top:306px;font-size:13px;line-height:18px;color:#111;transform:scaleX(0.9600);transform-origin:100% 50%;">12 300</span>
<span class="t" style="left:384.73px;top:306px;font-size:13px;line-height:18px;color:#111;transform:scaleX(0.9600);transform-origin:100% 50%;">45 300</span>
<span class="t" style="left:474.73px;top:306px;font-size:13px;line-height:18px;color:#111;transform:scaleX(0.9600);transform-origin:100% 50%;">20 550</span>
<span class="t" style="left:545.41px;top:306px;font-size:13px;line-height:18px;color:#111;transform:scaleX(0.9600);transform-origin:100% 50%;">-24 750</span>
<span class="t" style="left:109.27px;top:326px;font-size:13px;line-height:18px;color:#111;transform:scaleX(0.9600);transform-origin:100% 50%;">4</span>
<span class="t" style="left:174.73px;top:326px;font-size:13px;line-height:18px;color:#111;transform:scaleX(0.9600);transform-origin:100% 50%;">33 000</span>
<span class="t" style="left:280.73px;top:326px;font-size:13px;line-height:18px;color:#111;transform:scaleX(0.9600);transform-origin:100% 50%;">16 400</span>
<span class="t" style="left:384.73px;top:326px;font-size:13px;line-height:18px;color:#111;transform:scaleX(0.9600);transform-origin:100% 50%;">49 400</span>
<span class="t" style="left:474.73px;top:326px;font-size:13px;line-height:18px;color:#111;transform:scaleX(0.9600);transform-origin:100% 50%;">27 400</span>
<span class="t" style="left:545.41px;top:326px;font-size:13px;line-height:18px;color:#111;transform:scaleX(0.9600);transform-origin:100% 50%;">-22 000</span>
<span class="t" style="left:109.27px;top:346px;font-size:13px;line-height:18px;color:#111;transform:scaleX(0.9600);transform-origin:100% 50%;">5</span>
<span class="t" style="left:174.73px;top:346px;font-size:13px;line-height:18px;color:#111;transform:scaleX(0.9600);transform-origin:100% 50%;">33 000</span>
<span class="t" style="left:280.73px;top:346px;font-size:13px;line-height:18px;color:#111;transform:scaleX(0.9600);transform-origin:100% 50%;">20 500</span>
<span class="t" style="left:384.73px;top:346px;font-size:13px;line-height:18px;color:#111;transform:scaleX(0.9600);transform-origin:100% 50%;">53 500</span>
<span class="t" style="left:474.73px;top:346px;font-size:13px;line-height:18px;color:#111;transform:scaleX(0.9600);transform-origin:100% 50%;">34 250</span>
<span class="t" style="left:545.41px;top:346px;font-size:13px;line-height:18px;color:#111;transform:scaleX(0.9600);transform-origin:100% 50%;">-19 250</span>
<span class="t" style="left:109.27px;top:366px;font-size:13px;line-height:18px;color:#111;transform:scaleX(0.9600);transform-origin:100% 50%;">6</span>
<span class="t" style="left:174.73px;top:366px;font-size:13px;line-height:18px;color:#111;transform:scaleX(0.9600);transform-origin:100% 50%;">33 000</span>
<span class="t" style="left:280.73px;top:366px;font-size:13px;line-height:18px;color:#111;transform:scaleX(0.9600);transform-origin:100% 50%;">24 600</span>
<span class="t" style="left:384.73px;top:366px;font-size:13px;line-height:18px;color:#111;transform:scaleX(0.9600);transform-origin:100% 50%;">57 600</span>
<span class="t" style="left:474.73px;top:366px;font-size:13px;line-height:18px;color:#111;transform:scaleX(0.9600);transform-origin:100% 50%;">41 100</span>
<span class="t" style="left:545.41px;top:366px;font-size:13px;line-height:18px;color:#111;transform:scaleX(0.9600);transform-origin:100% 50%;">-16 500</span>
<span class="t" style="left:109.27px;top:386px;font-size:13px;line-height:18px;color:#111;transform:scaleX(0.9600);transform-origin:100% 50%;">7</span>
<span class="t" style="left:174.73px;top:386px;font-size:13px;line-height:18px;color:#111;transform:scaleX(0.9600);transform-origin:100% 50%;">33 000</span>
<span class="t" style="left:280.73px;top:386px;font-size:13px;line-height:18px;color:#111;transform:scaleX(0.9600);transform-origin:100% 50%;">28 700</span>
<span class="t" style="left:384.73px;top:386px;font-size:13px;line-height:18px;color:#111;transform:scaleX(0.9600);transform-origin:100% 50%;">61 700</span>
<span class="t" style="left:474.73px;top:386px;font-size:13px;line-height:18px;color:#111;transform:scaleX(0.9600);transform-origin:100% 50%;">47 950</span>
<span class="t" style="left:545.41px;top:386px;font-size:13px;line-height:18px;color:#111;transform:scaleX(0.9600);transform-origin:100% 50%;">-13 750</span>
<span class="t" style="left:109.27px;top:406px;font-size:13px;line-height:18px;color:#111;transform:scaleX(0.9600);transform-origin:100% 50%;">8</span>
<span class="t" style="left:174.73px;top:406px;font-size:13px;line-height:18px;color:#111;transform:scaleX(0.9600);transform-origin:100% 50%;">33 000</span>
<span class="t" style="left:280.73px;top:406px;font-size:13px;line-height:18px;color:#111;transform:scaleX(0.9600);transform-origin:100% 50%;">32 800</span>
<span class="t" style="left:384.73px;top:406px;font-size:13px;line-height:18px;color:#111;transform:scaleX(0.9600);transform-origin:100% 50%;">65 800</span>
<span class="t" style="left:474.73px;top:406px;font-size:13px;line-height:18px;color:#111;transform:scaleX(0.9600);transform-origin:100% 50%;">54 800</span>
<span class="t" style="left:546.37px;top:406px;font-size:13px;line-height:18px;color:#111;transform:scaleX(0.9600);transform-origin:100% 50%;">-11 000</span>
<span class="t" style="left:109.27px;top:426px;font-size:13px;line-height:18px;color:#111;transform:scaleX(0.9600);transform-origin:100% 50%;">9</span>
<span class="t" style="left:174.73px;top:426px;font-size:13px;line-height:18px;color:#111;transform:scaleX(0.9600);transform-origin:100% 50%;">33 000</span>
<span class="t" style="left:280.73px;top:426px;font-size:13px;line-height:18px;color:#111;transform:scaleX(0.9600);transform-origin:100% 50%;">36 900</span>
<span class="t" style="left:384.73px;top:426px;font-size:13px;line-height:18px;color:#111;transform:scaleX(0.9600);transform-origin:100% 50%;">69 900</span>
<span class="t" style="left:474.73px;top:426px;font-size:13px;line-height:18px;color:#111;transform:scaleX(0.9600);transform-origin:100% 50%;">61 650</span>
<span class="t" style="left:552.64px;top:426px;font-size:13px;line-height:18px;color:#111;transform:scaleX(0.9600);transform-origin:100% 50%;">-8 250</span>
<span class="t" style="left:102.04px;top:446px;font-size:13px;line-height:18px;color:#111;transform:scaleX(0.9600);transform-origin:100% 50%;">10</span>
<span class="t" style="left:174.73px;top:446px;font-size:13px;line-height:18px;color:#111;transform:scaleX(0.9600);transform-origin:100% 50%;">33 000</span>
<span class="t" style="left:280.73px;top:446px;font-size:13px;line-height:18px;color:#111;transform:scaleX(0.9600);transform-origin:100% 50%;">41 000</span>
<span class="t" style="left:384.73px;top:446px;font-size:13px;line-height:18px;color:#111;transform:scaleX(0.9600);transform-origin:100% 50%;">74 000</span>
<span class="t" style="left:474.73px;top:446px;font-size:13px;line-height:18px;color:#111;transform:scaleX(0.9600);transform-origin:100% 50%;">68 500</span>
<span class="t" style="left:552.64px;top:446px;font-size:13px;line-height:18px;color:#111;transform:scaleX(0.9600);transform-origin:100% 50%;">-5 500</span>
<span class="t" style="left:103.00px;top:466px;font-size:13px;line-height:18px;color:#111;transform:scaleX(0.9600);transform-origin:100% 50%;">11</span>
<span class="t" style="left:174.73px;top:466px;font-size:13px;line-height:18px;color:#111;transform:scaleX(0.9600);transform-origin:100% 50%;">33 000</span>
<span class="t" style="left:280.73px;top:466px;font-size:13px;line-height:18px;color:#111;transform:scaleX(0.9600);transform-origin:100% 50%;">45 100</span>
<span class="t" style="left:384.73px;top:466px;font-size:13px;line-height:18px;color:#111;transform:scaleX(0.9600);transform-origin:100% 50%;">78 100</span>
<span class="t" style="left:474.73px;top:466px;font-size:13px;line-height:18px;color:#111;transform:scaleX(0.9600);transform-origin:100% 50%;">75 350</span>
<span class="t" style="left:552.64px;top:466px;font-size:13px;line-height:18px;color:#111;transform:scaleX(0.9600);transform-origin:100% 50%;">-2 750</span>
<span class="t" style="left:102.04px;top:486px;font-size:13px;line-height:18px;color:#111;transform:scaleX(0.9600);transform-origin:100% 50%;">12</span>
<span class="t" style="left:174.73px;top:486px;font-size:13px;line-height:18px;color:#111;transform:scaleX(0.9600);transform-origin:100% 50%;">33 000</span>
<span class="t" style="left:280.73px;top:486px;font-size:13px;line-height:18px;color:#111;transform:scaleX(0.9600);transform-origin:100% 50%;">49 200</span>
<span class="t" style="left:384.73px;top:486px;font-size:13px;line-height:18px;color:#111;transform:scaleX(0.9600);transform-origin:100% 50%;">82 200</span>
<span class="t" style="left:474.73px;top:486px;font-size:13px;line-height:18px;color:#111;transform:scaleX(0.9600);transform-origin:100% 50%;">82 200</span>
<span class="t" style="left:582.27px;top:486px;font-size:13px;line-height:18px;color:#111;transform:scaleX(0.9600);transform-origin:100% 50%;">0</span>
<span class="t" style="left:102.04px;top:506px;font-size:13px;line-height:18px;color:#111;transform:scaleX(0.9600);transform-origin:100% 50%;">13</span>
<span class="t" style="left:174.73px;top:506px;font-size:13px;line-height:18px;color:#111;transform:scaleX(0.9600);transform-origin:100% 50%;">33 000</span>
<span class="t" style="left:280.73px;top:506px;font-size:13px;line-height:18px;color:#111;transform:scaleX(0.9600);transform-origin:100% 50%;">53 300</span>
<span class="t" style="left:384.73px;top:506px;font-size:13px;line-height:18px;color:#111;transform:scaleX(0.9600);transform-origin:100% 50%;">86 300</span>
<span class="t" style="left:474.73px;top:506px;font-size:13px;line-height:18px;color:#111;transform:scaleX(0.9600);transform-origin:100% 50%;">89 050</span>
<span class="t" style="left:556.96px;top:506px;font-size:13px;line-height:18px;color:#111;transform:scaleX(0.9600);transform-origin:100% 50%;">2 750</span>
<span class="t" style="left:102.04px;top:526px;font-size:13px;line-height:18px;color:#111;transform:scaleX(0.9600);transform-origin:100% 50%;">14</span>
<span class="t" style="left:174.73px;top:526px;font-size:13px;line-height:18px;color:#111;transform:scaleX(0.9600);transform-origin:100% 50%;">33 000</span>
<span class="t" style="left:280.73px;top:526px;font-size:13px;line-height:18px;color:#111;transform:scaleX(0.9600);transform-origin:100% 50%;">57 400</span>
<span class="t" style="left:384.73px;top:526px;font-size:13px;line-height:18px;color:#111;transform:scaleX(0.9600);transform-origin:100% 50%;">90 400</span>
<span class="t" style="left:474.73px;top:526px;font-size:13px;line-height:18px;color:#111;transform:scaleX(0.9600);transform-origin:100% 50%;">95 900</span>
<span class="t" style="left:556.96px;top:526px;font-size:13px;line-height:18px;color:#111;transform:scaleX(0.9600);transform-origin:100% 50%;">5 500</span>
<span class="t" style="left:102.04px;top:546px;font-size:13px;line-height:18px;color:#111;transform:scaleX(0.9600);transform-origin:100% 50%;">15</span>
<span class="t" style="left:174.73px;top:546px;font-size:13px;line-height:18px;color:#111;transform:scaleX(0.9600);transform-origin:100% 50%;">33 000</span>
<span class="t" style="left:280.73px;top:546px;font-size:13px;line-height:18px;color:#111;transform:scaleX(0.9600);transform-origin:100% 50%;">61 500</span>
<span class="t" style="left:384.73px;top:546px;font-size:13px;line-height:18px;color:#111;transform:scaleX(0.9600);transform-origin:100% 50%;">94 500</span>
<span class="t" style="left:467.50px;top:546px;font-size:13px;line-height:18px;color:#111;transform:scaleX(0.9600);transform-origin:100% 50%;">102 750</span>
<span class="t" style="left:556.96px;top:546px;font-size:13px;line-height:18px;color:#111;transform:scaleX(0.9600);transform-origin:100% 50%;">8 250</span>
<span class="t" style="left:102.04px;top:566px;font-size:13px;line-height:18px;color:#111;transform:scaleX(0.9600);transform-origin:100% 50%;">16</span>
<span class="t" style="left:174.73px;top:566px;font-size:13px;line-height:18px;color:#111;transform:scaleX(0.9600);transform-origin:100% 50%;">33 000</span>
<span class="t" style="left:280.73px;top:566px;font-size:13px;line-height:18px;color:#111;transform:scaleX(0.9600);transform-origin:100% 50%;">65 600</span>
<span class="t" style="left:384.73px;top:566px;font-size:13px;line-height:18px;color:#111;transform:scaleX(0.9600);transform-origin:100% 50%;">98 600</span>
<span class="t" style="left:467.50px;top:566px;font-size:13px;line-height:18px;color:#111;transform:scaleX(0.9600);transform-origin:100% 50%;">109 600</span>
<span class="t" style="left:550.70px;top:566px;font-size:13px;line-height:18px;color:#111;transform:scaleX(0.9600);transform-origin:100% 50%;">11 000</span>
<span class="t" style="left:102.04px;top:586px;font-size:13px;line-height:18px;color:#111;transform:scaleX(0.9600);transform-origin:100% 50%;">17</span>
<span class="t" style="left:174.73px;top:586px;font-size:13px;line-height:18px;color:#111;transform:scaleX(0.9600);transform-origin:100% 50%;">33 000</span>
<span class="t" style="left:280.73px;top:586px;font-size:13px;line-height:18px;color:#111;transform:scaleX(0.9600);transform-origin:100% 50%;">69 700</span>
<span class="t" style="left:377.50px;top:586px;font-size:13px;line-height:18px;color:#111;transform:scaleX(0.9600);transform-origin:100% 50%;">102 700</span>
<span class="t" style="left:468.47px;top:586px;font-size:13px;line-height:18px;color:#111;transform:scaleX(0.9600);transform-origin:100% 50%;">116 450</span>
<span class="t" style="left:549.73px;top:586px;font-size:13px;line-height:18px;color:#111;transform:scaleX(0.9600);transform-origin:100% 50%;">13 750</span>
<span class="t" style="left:102.04px;top:606px;font-size:13px;line-height:18px;color:#111;transform:scaleX(0.9600);transform-origin:100% 50%;">18</span>
<span class="t" style="left:174.73px;top:606px;font-size:13px;line-height:18px;color:#111;transform:scaleX(0.9600);transform-origin:100% 50%;">33 000</span>
<span class="t" style="left:280.73px;top:606px;font-size:13px;line-height:18px;color:#111;transform:scaleX(0.9600);transform-origin:100% 50%;">73 800</span>
<span class="t" style="left:377.50px;top:606px;font-size:13px;line-height:18px;color:#111;transform:scaleX(0.9600);transform-origin:100% 50%;">106 800</span>
<span class="t" style="left:467.50px;top:606px;font-size:13px;line-height:18px;color:#111;transform:scaleX(0.9600);transform-origin:100% 50%;">123 300</span>
<span class="t" style="left:549.73px;top:606px;font-size:13px;line-height:18px;color:#111;transform:scaleX(0.9600);transform-origin:100% 50%;">16 500</span>
<div class="b" style="left:25px;top:263px;width:567px;height:1px;background:#000;"></div>
<div class="b" style="left:25px;top:283px;width:567px;height:1px;background:#000;"></div>
<div class="b" style="left:25px;top:303px;width:567px;height:1px;background:#000;"></div>
<div class="b" style="left:25px;top:323px;width:567px;height:1px;background:#000;"></div>
<div class="b" style="left:25px;top:343px;width:567px;height:1px;background:#000;"></div>
<div class="b" style="left:25px;top:363px;width:567px;height:1px;background:#000;"></div>
<div class="b" style="left:25px;top:383px;width:567px;height:1px;background:#000;"></div>
<div class="b" style="left:25px;top:403px;width:567px;height:1px;background:#000;"></div>
<div class="b" style="left:25px;top:423px;width:567px;height:1px;background:#000;"></div>
<div class="b" style="left:25px;top:443px;width:567px;height:1px;background:#000;"></div>
<div class="b" style="left:25px;top:463px;width:567px;height:1px;background:#000;"></div>
<div class="b" style="left:25px;top:483px;width:567px;height:1px;background:#000;"></div>
<div class="b" style="left:25px;top:503px;width:567px;height:1px;background:#000;"></div>
<div class="b" style="left:25px;top:523px;width:567px;height:1px;background:#000;"></div>
<div class="b" style="left:25px;top:543px;width:567px;height:1px;background:#000;"></div>
<div class="b" style="left:25px;top:563px;width:567px;height:1px;background:#000;"></div>
<div class="b" style="left:25px;top:583px;width:567px;height:1px;background:#000;"></div>
<div class="b" style="left:25px;top:603px;width:567px;height:1px;background:#000;"></div>
<div class="b" style="left:25px;top:623px;width:567px;height:1px;background:#000;"></div>
<div class="b" style="left:118px;top:222px;width:1px;height:402px;background:#000;"></div>
<div class="b" style="left:216px;top:222px;width:1px;height:402px;background:#000;"></div>
<div class="b" style="left:322px;top:222px;width:1px;height:402px;background:#000;"></div>
<div class="b" style="left:426px;top:222px;width:1px;height:402px;background:#000;"></div>
<div class="b" style="left:516px;top:222px;width:1px;height:402px;background:#000;"></div>
<div class="b" style="left:591px;top:222px;width:1px;height:402px;background:#000;"></div>
</div></div>
<div class="b" style="left:72px;top:659px;width:650px;height:6px;background:#fff;border-top:1px solid #c6c6c6;border-left:1px solid #c6c6c6;box-sizing:border-box;"></div>
<div class="b" style="left:2px;top:665px;width:764px;height:1px;background:#a6a6a6;"></div>
<div class="b" style="left:766px;top:203px;width:2px;height:462px;background:#e6e6e6;"></div>
<div class="b" style="left:769px;top:219px;width:14px;height:432px;background-color:#dadad9;background-image:radial-gradient(#ececec .6px,transparent .9px);background-size:3px 3px;"></div>
<div class="b" style="left:769px;top:204px;width:14px;height:15px;background:#fff;border:1px solid #ababab;box-sizing:border-box;"></div>
<svg class="b" style="left:769px;top:204px;" width="14" height="15" viewBox="0 0 14 15"><path d="M3.500 9.500h7L7 5.500z" fill="#666"/></svg>
<div class="b" style="left:769px;top:219px;width:14px;height:220px;background:#fff;border:1px solid #ababab;box-sizing:border-box;border-top:none;"></div>
<div class="b" style="left:769px;top:651px;width:14px;height:15px;background:#fff;border:1px solid #ababab;box-sizing:border-box;"></div>
<svg class="b" style="left:769px;top:651px;" width="14" height="15" viewBox="0 0 14 15"><path d="M3.500 5.500h7L7 9.500z" fill="#666"/></svg>
<div class="b" style="left:504px;top:672px;width:248px;height:15px;background-color:#dadad9;background-image:radial-gradient(#ececec .6px,transparent .9px);background-size:3px 3px;"></div>
<div class="b" style="left:489px;top:672px;width:15px;height:15px;background:#fff;border:1px solid #ababab;box-sizing:border-box;"></div>
<svg class="b" style="left:489px;top:672px;" width="15" height="15" viewBox="0 0 15 15"><path d="M9.500 4v7L5.500 7.500z" fill="#666"/></svg>
<div class="b" style="left:503px;top:672px;width:186px;height:15px;background:#fff;border:1px solid #ababab;box-sizing:border-box;"></div>
<div class="b" style="left:751px;top:672px;width:15px;height:15px;background:#fff;border:1px solid #ababab;box-sizing:border-box;"></div>
<svg class="b" style="left:751px;top:672px;" width="15" height="15" viewBox="0 0 15 15"><path d="M5.500 4v7l4-3.500z" fill="#666"/></svg>
<div class="b" style="left:472px;top:674px;width:2px;height:2px;background:#a6a6a6;"></div>
<div class="b" style="left:472px;top:678.2px;width:2px;height:2px;background:#a6a6a6;"></div>
<div class="b" style="left:472px;top:682.4px;width:2px;height:2px;background:#a6a6a6;"></div>
<div class="b" style="left:314.3px;top:298.3px;width:451.7px;height:289.2px;overflow:hidden;background:#fff;"></div>
<svg class="b" style="left:0;top:0;" width="766" height="600" viewBox="0 0 766 600"><path d="M372.1 487.5H766" stroke="#d6d6d6" stroke-width="1"/><path d="M372.1 464.5H766" stroke="#d6d6d6" stroke-width="1"/><path d="M372.1 440.5H766" stroke="#d6d6d6" stroke-width="1"/><path d="M372.1 417.5H766" stroke="#d6d6d6" stroke-width="1"/><path d="M372.1 394.5H766" stroke="#d6d6d6" stroke-width="1"/><path d="M372.1 371.5H766" stroke="#d6d6d6" stroke-width="1"/><path d="M372.1 347.5H766" stroke="#d6d6d6" stroke-width="1"/><path d="M372.5 347.0V510.4" stroke="#d6d6d6" stroke-width="1"/><path d="M394.5 347.0V510.4" stroke="#d6d6d6" stroke-width="1"/><path d="M415.5 347.0V510.4" stroke="#d6d6d6" stroke-width="1"/><path d="M436.5 347.0V510.4" stroke="#d6d6d6" stroke-width="1"/><path d="M457.5 347.0V510.4" stroke="#d6d6d6" stroke-width="1"/><path d="M478.5 347.0V510.4" stroke="#d6d6d6" stroke-width="1"/><path d="M499.5 347.0V510.4" stroke="#d6d6d6" stroke-width="1"/><path d="M520.5 347.0V510.4" stroke="#d6d6d6" stroke-width="1"/><path d="M541.5 347.0V510.4" stroke="#d6d6d6" stroke-width="1"/><path d="M562.5 347.0V510.4" stroke="#d6d6d6" stroke-width="1"/><path d="M583.5 347.0V510.4" stroke="#d6d6d6" stroke-width="1"/><path d="M604.5 347.0V510.4" stroke="#d6d6d6" stroke-width="1"/><path d="M625.5 347.0V510.4" stroke="#d6d6d6" stroke-width="1"/><path d="M646.5 347.0V510.4" stroke="#d6d6d6" stroke-width="1"/><path d="M667.5 347.0V510.4" stroke="#d6d6d6" stroke-width="1"/><path d="M688.5 347.0V510.4" stroke="#d6d6d6" stroke-width="1"/><path d="M710.5 347.0V510.4" stroke="#d6d6d6" stroke-width="1"/><path d="M731.5 347.0V510.4" stroke="#d6d6d6" stroke-width="1"/><path d="M752.5 347.0V510.4" stroke="#d6d6d6" stroke-width="1"/><path d="M370.6 510.400H766" stroke="#8c8c8c" stroke-width="1.300"/><path d="M394.50 467.53L415.50 462.76L436.50 457.99L457.50 453.22L478.50 448.45L499.50 443.68L520.50 438.91L541.50 434.14L562.50 429.37L583.50 424.60L604.50 419.83L625.50 415.05L646.50 410.28L667.50 405.51L688.50 400.74L710.50 395.97L731.50 391.20L752.50 386.43" fill="none" stroke="#1093dd" stroke-width="1.8" stroke-linejoin="round"/><circle cx="394.50" cy="467.53" r="3.500" fill="#1093dd"/><circle cx="415.50" cy="462.76" r="3.500" fill="#1093dd"/><circle cx="436.50" cy="457.99" r="3.500" fill="#1093dd"/><circle cx="457.50" cy="453.22" r="3.500" fill="#1093dd"/><circle cx="478.50" cy="448.45" r="3.500" fill="#1093dd"/><circle cx="499.50" cy="443.68" r="3.500" fill="#1093dd"/><circle cx="520.50" cy="438.91" r="3.500" fill="#1093dd"/><circle cx="541.50" cy="434.14" r="3.500" fill="#1093dd"/><circle cx="562.50" cy="429.37" r="3.500" fill="#1093dd"/><circle cx="583.50" cy="424.60" r="3.500" fill="#1093dd"/><circle cx="604.50" cy="419.83" r="3.500" fill="#1093dd"/><circle cx="625.50" cy="415.05" r="3.500" fill="#1093dd"/><circle cx="646.50" cy="410.28" r="3.500" fill="#1093dd"/><circle cx="667.50" cy="405.51" r="3.500" fill="#1093dd"/><circle cx="688.50" cy="400.74" r="3.500" fill="#1093dd"/><circle cx="710.50" cy="395.97" r="3.500" fill="#1093dd"/><circle cx="731.50" cy="391.20" r="3.500" fill="#1093dd"/><circle cx="752.50" cy="386.43" r="3.500" fill="#1093dd"/><path d="M394.50 502.73L415.50 494.76L436.50 486.79L457.50 478.82L478.50 470.85L499.50 462.88L520.50 454.91L541.50 446.94L562.50 438.97L583.50 431.00L604.50 423.02L625.50 415.05L646.50 407.08L667.50 399.11L688.50 391.14L710.50 383.17L731.50 375.20L752.50 367.23" fill="none" stroke="#fd8530" stroke-width="2.0" stroke-linejoin="round"/><circle cx="394.50" cy="502.73" r="3.500" fill="#fd8530"/><circle cx="415.50" cy="494.76" r="3.500" fill="#fd8530"/><circle cx="436.50" cy="486.79" r="3.500" fill="#fd8530"/><circle cx="457.50" cy="478.82" r="3.500" fill="#fd8530"/><circle cx="478.50" cy="470.85" r="3.500" fill="#fd8530"/><circle cx="499.50" cy="462.88" r="3.500" fill="#fd8530"/><circle cx="520.50" cy="454.91" r="3.500" fill="#fd8530"/><circle cx="541.50" cy="446.94" r="3.500" fill="#fd8530"/><circle cx="562.50" cy="438.97" r="3.500" fill="#fd8530"/><circle cx="583.50" cy="431.00" r="3.500" fill="#fd8530"/><circle cx="604.50" cy="423.02" r="3.500" fill="#fd8530"/><circle cx="625.50" cy="415.05" r="3.500" fill="#fd8530"/><circle cx="646.50" cy="407.08" r="3.500" fill="#fd8530"/><circle cx="667.50" cy="399.11" r="3.500" fill="#fd8530"/><circle cx="688.50" cy="391.14" r="3.500" fill="#fd8530"/><circle cx="710.50" cy="383.17" r="3.500" fill="#fd8530"/><circle cx="731.50" cy="375.20" r="3.500" fill="#fd8530"/><circle cx="752.50" cy="367.23" r="3.500" fill="#fd8530"/><path d="M370 510.500V532.600H766" fill="none" stroke="#c4c4c4" stroke-width="1.200"/><circle cx="369.900" cy="510.400" r="2" fill="#fff" stroke="#1093dd" stroke-width="1.100"/><circle cx="369.900" cy="532.600" r="2" fill="#fff" stroke="#1093dd" stroke-width="1.100"/><path d="M453 552.800H479.200" stroke="#1093dd" stroke-width="1.900"/><circle cx="466" cy="552.800" r="3.500" fill="#1093dd"/><path d="M561 552.800H587.500" stroke="#fd8530" stroke-width="2"/><circle cx="574" cy="552.800" r="3.500" fill="#fd8530"/><path d="M766 299.3H315.3V586.5H766" fill="none" stroke="#a9adab" stroke-width="1.300"/><circle cx="315.3" cy="299.5" r="4.500" fill="#fff" stroke="#9a9e9c" stroke-width="1.700"/><circle cx="554" cy="299.5" r="4.500" fill="#fff" stroke="#9a9e9c" stroke-width="1.700"/><circle cx="315.3" cy="441.5" r="4.500" fill="#fff" stroke="#9a9e9c" stroke-width="1.700"/><circle cx="315.3" cy="586.5" r="4.500" fill="#fff" stroke="#9a9e9c" stroke-width="1.700"/><circle cx="554" cy="586.5" r="4.500" fill="#fff" stroke="#9a9e9c" stroke-width="1.700"/></svg>
<div class="b" style="left:765px;top:221px;width:1px;height:445px;background:#a3a6a4;"></div>
<span class="t" style="left:466.50px;top:311px;font-size:16px;line-height:21px;color:#4f4f4f;transform:scaleX(1.0624);transform-origin:0 50%;">Точка безубыточности</span>
<span class="t" style="left:355.36px;top:503px;font-size:10.5px;line-height:15px;color:#505050;">0</span>
<span class="t" style="left:329.08px;top:480px;font-size:10.5px;line-height:15px;color:#505050;">20 000</span>
<span class="t" style="left:329.08px;top:457px;font-size:10.5px;line-height:15px;color:#505050;">40 000</span>
<span class="t" style="left:329.08px;top:433px;font-size:10.5px;line-height:15px;color:#505050;">60 000</span>
<span class="t" style="left:329.08px;top:410px;font-size:10.5px;line-height:15px;color:#505050;">80 000</span>
<span class="t" style="left:323.24px;top:387px;font-size:10.5px;line-height:15px;color:#505050;">100 000</span>
<span class="t" style="left:323.24px;top:364px;font-size:10.5px;line-height:15px;color:#505050;">120 000</span>
<span class="t" style="left:323.24px;top:340px;font-size:10.5px;line-height:15px;color:#505050;">140 000</span>
<span class="t" style="left:369.78px;top:518px;font-size:10.5px;line-height:15px;color:#505050;">0</span>
<span class="t" style="left:391.78px;top:518px;font-size:10.5px;line-height:15px;color:#505050;">1</span>
<span class="t" style="left:412.78px;top:518px;font-size:10.5px;line-height:15px;color:#505050;">2</span>
<span class="t" style="left:433.78px;top:518px;font-size:10.5px;line-height:15px;color:#505050;">3</span>
<span class="t" style="left:454.78px;top:518px;font-size:10.5px;line-height:15px;color:#505050;">4</span>
<span class="t" style="left:475.78px;top:518px;font-size:10.5px;line-height:15px;color:#505050;">5</span>
<span class="t" style="left:496.78px;top:518px;font-size:10.5px;line-height:15px;color:#505050;">6</span>
<span class="t" style="left:517.78px;top:518px;font-size:10.5px;line-height:15px;color:#505050;">7</span>
<span class="t" style="left:538.78px;top:518px;font-size:10.5px;line-height:15px;color:#505050;">8</span>
<span class="t" style="left:559.78px;top:518px;font-size:10.5px;line-height:15px;color:#505050;">9</span>
<span class="t" style="left:577.86px;top:518px;font-size:10.5px;line-height:15px;color:#505050;">10</span>
<span class="t" style="left:599.25px;top:518px;font-size:10.5px;line-height:15px;color:#505050;">11</span>
<span class="t" style="left:619.86px;top:518px;font-size:10.5px;line-height:15px;color:#505050;">12</span>
<span class="t" style="left:640.86px;top:518px;font-size:10.5px;line-height:15px;color:#505050;">13</span>
<span class="t" style="left:661.86px;top:518px;font-size:10.5px;line-height:15px;color:#505050;">14</span>
<span class="t" style="left:682.86px;top:518px;font-size:10.5px;line-height:15px;color:#505050;">15</span>
<span class="t" style="left:704.86px;top:518px;font-size:10.5px;line-height:15px;color:#505050;">16</span>
<span class="t" style="left:725.86px;top:518px;font-size:10.5px;line-height:15px;color:#505050;">17</span>
<span class="t" style="left:746.86px;top:518px;font-size:10.5px;line-height:15px;color:#505050;">18</span>
<span class="t" style="left:481.20px;top:545px;font-size:10.5px;line-height:15px;color:#505050;transform:scaleX(1.0449);transform-origin:0 50%;">Итоговая</span>
<span class="t" style="left:481.20px;top:560px;font-size:10.5px;line-height:15px;color:#505050;transform:scaleX(1.0382);transform-origin:0 50%;">сумма зарат</span>
<span class="t" style="left:588.70px;top:545px;font-size:10.5px;line-height:15px;color:#505050;transform:scaleX(1.0651);transform-origin:0 50%;">Общий доход</span>
<div class="b" style="left:787px;top:203px;width:1px;height:489px;background:#c8c8c8;"></div>
<span class="t" style="left:801.00px;top:215px;font-size:20.5px;line-height:27px;color:#1f7246;transform:scaleX(1.0078);transform-origin:0 50%;">Формат оси</span>
<svg class="b" style="left:1036px;top:222px;" width="11" height="7" viewBox="0 0 11 7"><path d="M.6 .8h9.600l-4.800 5.200z" fill="#777"/></svg>
<svg class="b" style="left:1076px;top:218px;" width="14" height="14" viewBox="0 0 14 14"><path d="M2.300 2.200l9.400 9.400M11.700 2.200L2.300 11.600" stroke="#666" stroke-width="2" fill="none"/></svg>
<svg class="b" style="left:995px;top:175px;" width="95" height="50" viewBox="0 0 95 50"><path d="M10.900 10.900L62 34.300" stroke="#fe0000" stroke-width="3.800" fill="none"/><path d="M78.900 41.500Q69.500 32 62.600 20.600L60.800 33.200L52.500 43.600Q65 40.300 78.900 41.500z" fill="#fe0000"/></svg>
<span class="t" style="left:806.00px;top:253px;font-size:12.5px;line-height:17px;color:#222;font-weight:bold;transform:scaleX(0.9215);transform-origin:0 50%;">Параметры оси</span>
<svg class="b" style="left:901px;top:257px;" width="13" height="8" viewBox="0 0 13 8"><path d="M.5 .5h11l-5.500 6.500z" fill="#777"/></svg>
<div class="b" style="left:925px;top:253px;width:1px;height:17px;border-left:1px dotted #c4c4c4;"></div>
<span class="t" style="left:930.00px;top:253px;font-size:12.5px;line-height:17px;color:#222;transform:scaleX(0.9435);transform-origin:0 50%;">Параметры текста</span>
<svg class="b" style="left:804px;top:278px;" width="32" height="32" viewBox="0 0 32 32">
<path d="M3.200 16.500L13 6.800L22 15.900L12.500 25.500z" fill="#fff" stroke="#666" stroke-width="1.200" stroke-linejoin="round"/>
<path d="M9.200 10V6.200a2.300 2.300 0 0 1 4.500-.3L13.400 12.500" fill="none" stroke="#666" stroke-width="1.100"/>
<circle cx="13.400" cy="12.900" r="1.500" fill="#666"/>
<path d="M17.700 10.100C22.500 10.300 27 14.200 25.700 19C25.100 21.200 23.800 23.200 22.400 24.800L22.400 16z" fill="#6a6a6a"/></svg>
<svg class="b" style="left:846px;top:278px;" width="26" height="32" viewBox="0 0 26 32">
<path d="M12.400 4.100L22 11.400L18.400 22.800H6.400L2.500 11.400z" fill="#fff" stroke="#686b69" stroke-width="1.200" stroke-linejoin="round"/>
<path d="M6.200 23.200h12.400" stroke="#555" stroke-width="1.800"/>
<path d="M6 24.300h12.800l1.200 3.500H4.800z" fill="#f2f2f2"/>
<path d="M6 24.200l-.9 2.600M18.800 24.200l.9 2.600" stroke="#cfcfcf" stroke-width=".8"/></svg>
<svg class="b" style="left:885px;top:280px;" width="26" height="26" viewBox="0 0 26 26">
<rect x="8.200" y="9.200" width="14.600" height="14.500" rx="1" fill="#6b6b6b"/>
<path d="M8.700 5.400h13.600M8.700 3.200v4.600M22.300 3.200v4.600" stroke="#6a6a6a" stroke-width="1.100" fill="none"/>
<path d="M4.400 9.500v13.800M2.200 9.700h4.500M2.200 23.200h4.500" stroke="#6a6a6a" stroke-width="1.100" fill="none"/>
<path d="M15.500 12.500v3M15.500 17.800v3M11.200 16.600h3.200M16.700 16.600h3.200" stroke="#fff" stroke-width="1.100" fill="none"/>
<path d="M13.700 13.400l1.800-2.100 1.800 2.100zM13.700 19.800l1.800 2.100 1.800-2.100zM12.200 14.800l-2.100 1.800 2.100 1.800zM18.800 14.800l2.100 1.800-2.100 1.800z" fill="#fff"/>
<rect x="15" y="16.100" width="1" height="1" fill="#fff"/></svg>
<svg class="b" style="left:926px;top:281px;" width="24" height="24" viewBox="0 0 24 24">
<rect x="2" y="8" width="6" height="15" fill="#06723f"/><rect x="9" y="2" width="6" height="21" fill="#06723f"/><rect x="16" y="4.800" width="6.200" height="18.200" fill="#06723f"/></svg>
<svg class="b" style="left:914px;top:272px;" width="48" height="50" viewBox="0 0 48 50"><rect x="4.450" y="4.550" width="37.100" height="40.400" rx="8.800" ry="8.800" fill="none" stroke="#fa0000" stroke-width="2.900"/></svg>
<svg class="b" style="left:800px;top:318px;" width="296" height="8" viewBox="0 0 296 8"><path d="M1 5.500h130.500l4-4.500h4l4 4.500H293" fill="none" stroke="#c6c6c6" stroke-width="1"/></svg>
<svg class="b" style="left:808px;top:334px;" width="9" height="9" viewBox="0 0 9 9"><path d="M7.500 1.500v6h-6z" fill="#444"/></svg>
<span class="t" style="left:824.00px;top:331px;font-size:12.5px;line-height:17px;color:#1f7246;font-weight:bold;transform:scaleX(0.9112);transform-origin:0 50%;">Параметры оси</span>
<span class="t" style="left:823.00px;top:353px;font-size:12.5px;line-height:17px;color:#444;transform:scaleX(0.9799);transform-origin:0 50%;">Границы</span>
<span class="t" style="left:833.00px;top:379px;font-size:12.5px;line-height:17px;color:#444;transform:scaleX(1.0142);transform-origin:0 50%;"><u>М</u>инимум</span>
<span class="t" style="left:833.00px;top:410px;font-size:12.5px;line-height:17px;color:#444;"><u>М</u>аксимум</span>
<span class="t" style="left:823.00px;top:437px;font-size:12.5px;line-height:17px;color:#444;transform:scaleX(0.9418);transform-origin:0 50%;">Деления</span>
<span class="t" style="left:833.00px;top:463px;font-size:12.5px;line-height:17px;color:#444;transform:scaleX(0.9526);transform-origin:0 50%;"><u>О</u>сновные</span>
<span class="t" style="left:833.00px;top:494px;font-size:12.5px;line-height:17px;color:#444;transform:scaleX(0.9929);transform-origin:0 50%;"><u>П</u>ромежуточные</span>
<div class="b" style="left:938.5px;top:374.5px;width:73.5px;height:19.5px;background:#fff;border:1px solid #ababab;box-sizing:border-box;"></div>
<span class="t" style="left:945.00px;top:376px;font-size:12.5px;line-height:17px;color:#1d4f7c;transform:scaleX(0.9600);transform-origin:0 50%;">0,0</span>
<div class="b" style="left:938.5px;top:405.5px;width:73.5px;height:19.5px;background:#fff;border:1px solid #ababab;box-sizing:border-box;"></div>
<span class="t" style="left:945.00px;top:407px;font-size:12.5px;line-height:17px;color:#1d4f7c;transform:scaleX(0.9600);transform-origin:0 50%;">19,0</span>
<div class="b" style="left:938.5px;top:458.5px;width:73.5px;height:19.5px;background:#fff;border:1px solid #2e8b5e;box-sizing:border-box;"></div>
<span class="t" style="left:945.00px;top:460px;font-size:12.5px;line-height:17px;color:#1d4f7c;transform:scaleX(0.9600);transform-origin:0 50%;">1,0</span>
<div class="b" style="left:938.5px;top:489.5px;width:73.5px;height:19.5px;background:#fff;border:1px solid #ababab;box-sizing:border-box;"></div>
<span class="t" style="left:945.00px;top:491px;font-size:12.5px;line-height:17px;color:#1d4f7c;transform:scaleX(0.9600);transform-origin:0 50%;">0,2</span>
<div class="b" style="left:1020px;top:360px;width:56px;height:300px;overflow:hidden;">
<span class="t" style="left:9.00px;top:19px;font-size:12.5px;line-height:17px;color:#444;transform:scaleX(0.9535);transform-origin:0 50%;">Автомат</span>
<span class="t" style="left:9.00px;top:50px;font-size:12.5px;line-height:17px;color:#444;transform:scaleX(0.9535);transform-origin:0 50%;">Автомат</span>
<span class="t" style="left:9.00px;top:134px;font-size:12.5px;line-height:17px;color:#444;transform:scaleX(0.9535);transform-origin:0 50%;">Автомат</span>
<div class="b" style="left:1px;top:97px;width:70px;height:25px;background:#fff;border:1px solid #d0d0d0;box-sizing:border-box;"></div>
<span class="t" style="left:9.00px;top:103px;font-size:12.5px;line-height:17px;color:#444;transform:scaleX(0.9355);transform-origin:0 50%;">Сброс</span>
<div class="b" style="left:48px;top:210px;width:20px;height:20px;background:#f3f3f3;border:1px solid #dadada;box-sizing:border-box;"></div>
<div class="b" style="left:54px;top:215px;width:4px;height:9px;background:#f7b772;"></div>
</div>
<svg class="b" style="left:816px;top:448px;" width="208" height="42" viewBox="0 0 208 42"><rect x="5.400" y="5.900" width="196.200" height="29.200" rx="9" ry="9" fill="none" stroke="#fa0000" stroke-width="2.900"/></svg>
<span class="t" style="left:823.00px;top:521px;font-size:12.5px;line-height:17px;color:#444;transform:scaleX(0.9297);transform-origin:0 50%;">Вертикальная ось пересекает</span>
<svg class="b" style="left:832px;top:549.3px;" width="16" height="16" viewBox="0 0 16 16"><circle cx="8" cy="8" r="6" fill="#fff" stroke="#9f9f9f" stroke-width="1"/><circle cx="8" cy="8" r="3" fill="#666"/></svg>
<span class="t" style="left:851.00px;top:550px;font-size:12.5px;line-height:17px;color:#444;transform:scaleX(0.9698);transform-origin:0 50%;">Автов<u>ы</u>бор</span>
<svg class="b" style="left:832px;top:571.3px;" width="16" height="16" viewBox="0 0 16 16"><circle cx="8" cy="8" r="6" fill="#fff" stroke="#9f9f9f" stroke-width="1"/></svg>
<span class="t" style="left:851.00px;top:572px;font-size:12.5px;line-height:17px;color:#444;transform:scaleX(0.9608);transform-origin:0 50%;"><u>З</u>начение оси</span>
<svg class="b" style="left:832px;top:594.3px;" width="16" height="16" viewBox="0 0 16 16"><circle cx="8" cy="8" r="6" fill="#fff" stroke="#9f9f9f" stroke-width="1"/></svg>
<span class="t" style="left:851.00px;top:595px;font-size:12.5px;line-height:17px;color:#444;transform:scaleX(0.9623);transform-origin:0 50%;"><u>М</u>аксимальное значение по оси</span>
<span class="t" style="left:823.00px;top:621px;font-size:12.5px;line-height:17px;color:#444;transform:scaleX(0.9117);transform-origin:0 50%;">Ц<u>е</u>на деления</span>
<div class="b" style="left:1009px;top:618.5px;width:70px;height:19px;background:#fff;border:1px solid #ababab;box-sizing:border-box;"></div>
<span class="t" style="left:1016.00px;top:620px;font-size:12.5px;line-height:17px;color:#1d4f7c;transform:scaleX(0.9391);transform-origin:0 50%;">нет</span>
<div class="b" style="left:800px;top:640px;width:277px;height:19px;overflow:hidden;">
<div class="b" style="left:34px;top:6.5px;width:12px;height:12px;background:#f5f5f5;border:1px solid #dcdcdc;box-sizing:border-box;"></div>
<span class="t" style="left:51.00px;top:5px;font-size:12.5px;line-height:17px;color:#a6a6a6;transform:scaleX(0.9469);transform-origin:0 50%;">Отображать на диаграмме</span>
</div>
<div class="b" style="left:1076px;top:330px;width:18px;height:330px;background:#e6e6e6;"></div>
<div class="b" style="left:1078px;top:344px;width:14px;height:298px;background-color:#dadad9;background-image:radial-gradient(#ececec .6px,transparent .9px);background-size:3px 3px;"></div>
<div class="b" style="left:1078px;top:331px;width:14px;height:13px;background:#fff;border:1px solid #ababab;box-sizing:border-box;"></div>
<svg class="b" style="left:1078px;top:331px;" width="14" height="13" viewBox="0 0 14 13"><path d="M3.500 8.500h7L7 4.500z" fill="#666"/></svg>
<div class="b" style="left:1078px;top:343px;width:14px;height:207px;background:#fff;border:1px solid #ababab;box-sizing:border-box;"></div>
<div class="b" style="left:1078px;top:641.5px;width:14px;height:13.5px;background:#fff;border:1px solid #ababab;box-sizing:border-box;"></div>
<svg class="b" style="left:1078px;top:641.5px;" width="14" height="13" viewBox="0 0 14 13"><path d="M3.500 5h7L7 9z" fill="#666"/></svg>
<div class="b" style="left:818px;top:660px;width:243px;height:14px;background-color:#dadad9;background-image:radial-gradient(#ececec .6px,transparent .9px);background-size:3px 3px;"></div>
<div class="b" style="left:803.5px;top:660px;width:14.5px;height:14px;background:#fff;border:1px solid #ababab;box-sizing:border-box;"></div>
<svg class="b" style="left:803.5px;top:660px;" width="14" height="14" viewBox="0 0 14 14"><path d="M9 3.500v7L5 7z" fill="#666"/></svg>
<div class="b" style="left:817.5px;top:660px;width:203px;height:14px;background:#fff;border:1px solid #ababab;box-sizing:border-box;"></div>
<div class="b" style="left:1059.5px;top:660px;width:14.5px;height:14px;background:#fff;border:1px solid #ababab;box-sizing:border-box;"></div>
<svg class="b" style="left:1059.5px;top:660px;" width="14" height="14" viewBox="0 0 14 14"><path d="M5.500 3.500v7l4-3.500z" fill="#666"/></svg>
<svg class="b" style="left:20px;top:671px;" width="50" height="15" viewBox="0 0 50 15"><path d="M10.500 3v9l-5-4.500z" fill="#c6c6c6"/><path d="M34 3v9l5-4.500z" fill="#c6c6c6"/></svg>
<div class="b" style="left:99px;top:669px;width:1px;height:20px;background:#ababab;"></div>
<span class="t" style="left:113.50px;top:670px;font-size:13px;line-height:18px;color:#444;transform:scaleX(1.0091);transform-origin:0 50%;">microexcel.ru</span>
<div class="b" style="left:206px;top:665px;width:60px;height:25px;background:#fff;"></div>
<div class="b" style="left:206px;top:688px;width:60px;height:2px;background:#007440;"></div>
<div class="b" style="left:266px;top:665px;width:1px;height:23px;background:#c3c3c3;"></div>
<div class="b" style="left:206px;top:665px;width:1px;height:23px;background:#c3c3c3;"></div>
<span class="t" style="left:218.00px;top:670px;font-size:13px;line-height:18px;color:#1e6b41;font-weight:bold;transform:scaleX(0.9225);transform-origin:0 50%;">Лист1</span>
<svg class="b" style="left:298px;top:670px;" width="18" height="18" viewBox="0 0 18 18"><circle cx="9" cy="8.500" r="7.300" fill="none" stroke="#777" stroke-width="1.100"/><path d="M9 4.800v7.500M5.300 8.500h7.500" stroke="#777" stroke-width="1.300"/></svg>
<div class="b" style="left:0px;top:693px;width:1106px;height:1px;background:#c6c6c6;"></div>
<div class="b" style="left:0px;top:694px;width:1106px;height:19px;background:#f3f3f3;"></div>
<svg class="b" style="left:7px;top:696px;" width="15" height="15" viewBox="0 0 15 15"><rect x="1.500" y="4.500" width="11" height="9" fill="#fff" stroke="#555" stroke-width="1"/>
<path d="M1.500 7.500h11M1.500 10.500h11M5.500 7.500v6M9 7.500v6" stroke="#555" stroke-width=".8"/><circle cx="3.500" cy="3.500" r="2.700" fill="#444"/></svg>
<div class="b" style="left:807px;top:694px;width:38px;height:19px;background:#c8c8c8;"></div>
<svg class="b" style="left:818px;top:696px;" width="100" height="16" viewBox="0 0 100 16">
<g fill="none" stroke="#555" stroke-width="1">
<rect x="1.500" y="1.500" width="11" height="11"/><path d="M1.500 5.200h11M1.500 8.800h11M5.200 1.500v11M8.800 1.500v11"/>
<rect x="39.500" y="1.500" width="12" height="11"/><rect x="42.500" y="4.500" width="6" height="6"/><path d="M44 6.500h3M44 8.500h3"/>
<path d="M77.500 1.500h12v11h-12z"/><path d="M81.500 1.500v6.500h4.500v-6.500"/>
</g></svg>
<div class="b" style="left:925px;top:702px;width:5px;height:1.5px;background:#555;"></div>
<div class="b" style="left:937px;top:702.5px;width:98px;height:1px;background:#b0b0b0;"></div>
<div class="b" style="left:984.5px;top:696.5px;width:3.5px;height:12px;background:#555;"></div>
<svg class="b" style="left:1038px;top:697px;" width="11" height="11" viewBox="0 0 11 11"><path d="M5.500 1.500v8M1.500 5.500h8" stroke="#555" stroke-width="1.500"/></svg>
<span class="t" style="left:1058.00px;top:695px;font-size:11.5px;line-height:16px;color:#333;transform:scaleX(0.9201);transform-origin:0 50%;">100 %</span>
<div class="b" style="left:0px;top:63px;width:1px;height:652px;background:#007440;"></div>
<div class="b" style="left:1px;top:63px;width:1px;height:650px;background:#f4f0f0;"></div>
<div class="b" style="left:1104px;top:63px;width:1px;height:650px;background:#f6f6f6;"></div>
<div class="b" style="left:1105px;top:63px;width:1px;height:652px;background:#007440;"></div>
<div class="b" style="left:0px;top:713px;width:1106px;height:1px;background:#5aa583;"></div>
<div class="b" style="left:0px;top:714px;width:1106px;height:1px;background:#007440;"></div>
</body></html>
